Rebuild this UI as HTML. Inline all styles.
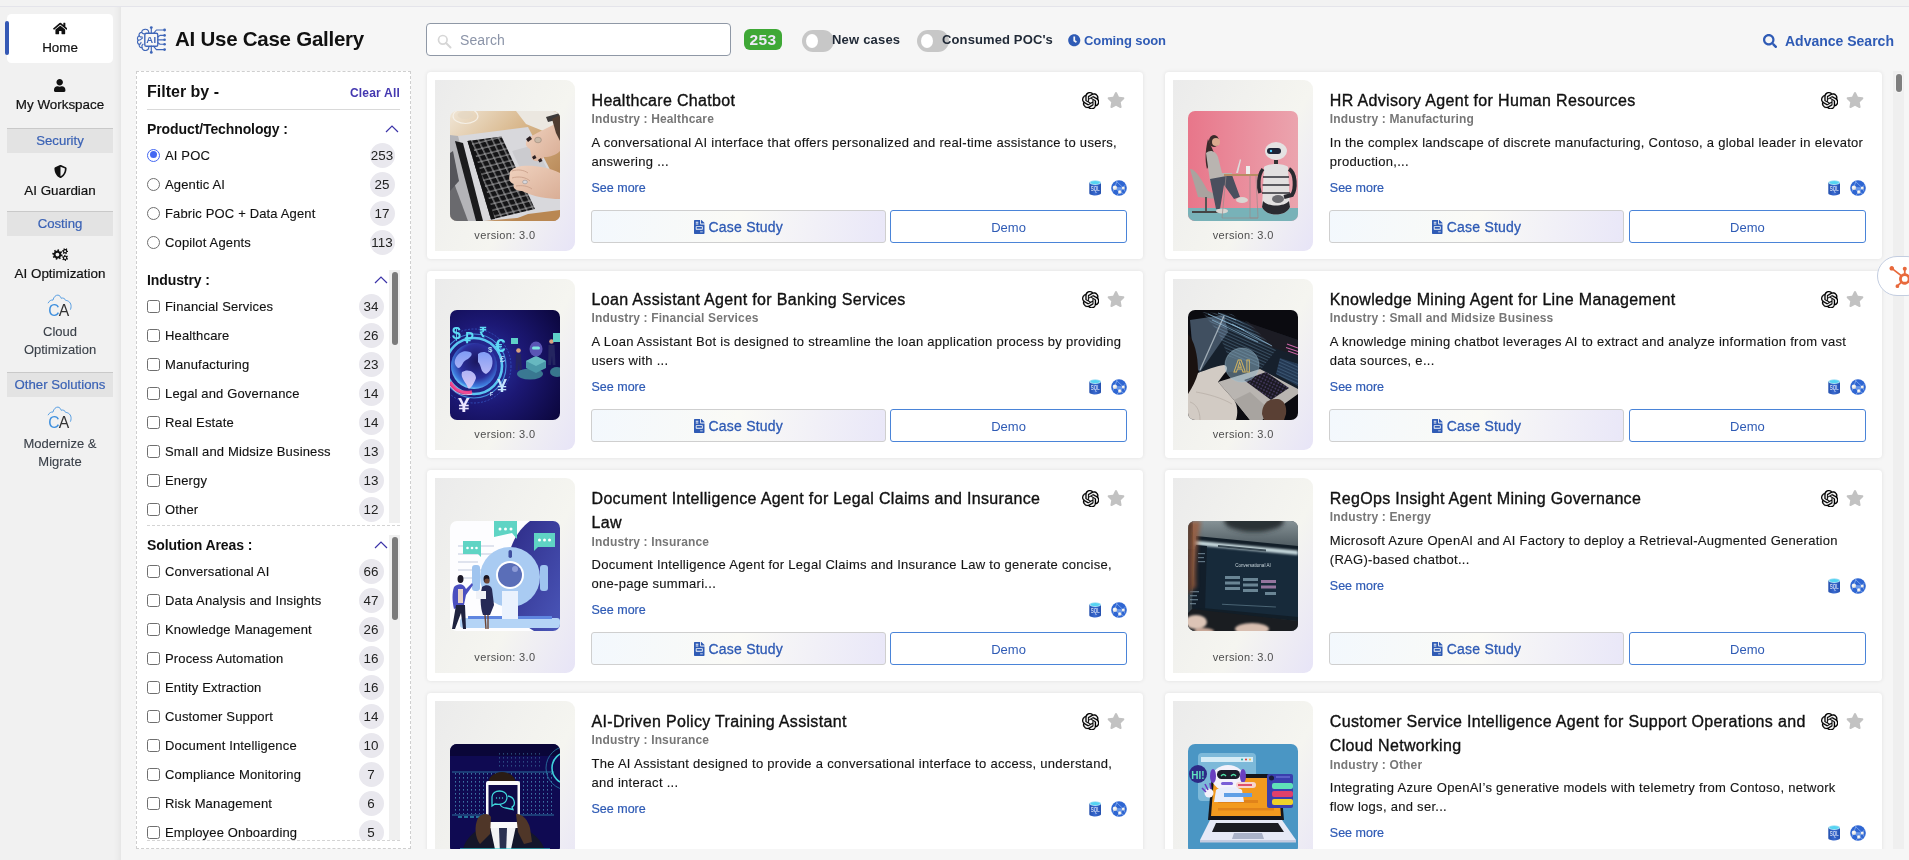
<!DOCTYPE html><html lang="en"><head><meta charset="utf-8"><title>AI Use Case Gallery</title><style>
*{box-sizing:border-box;margin:0;padding:0}
html,body{width:1909px;height:860px;overflow:hidden}
body{background:#f6f6f6;font-family:"Liberation Sans",sans-serif;color:#111;position:relative;font-size:13px}
.abs{position:absolute}
.topstrip{left:0;top:0;width:1909px;height:7px;background:#f2f2f2;border-bottom:1px solid #e4e4ea}
.side{left:0;top:7px;width:121px;height:853px;background:#f1f1f1;border-right:1px solid #e7e7e7;box-shadow:inset -7px 0 6px -6px rgba(0,0,0,.06)}
.nav{position:absolute;left:7px;width:106px;text-align:center;font-size:13.400px;color:#111;-webkit-text-stroke:0.2px #111}
.nav .ic{display:block;margin:0 auto}
.nav .lb{display:block;white-space:nowrap}
.home{top:14px;height:49px;background:#fff;border-radius:4.500px}
.home:before{content:"";position:absolute;left:-2px;top:7px;width:4px;height:34px;border-radius:2px;background:#3458b4}
.sec{position:absolute;left:7px;width:106px;height:25px;background:#e3e3e3;border-top:1px solid #c9c9c9;color:#3a62b5;font-size:13.200px;text-align:center;line-height:24px;-webkit-text-stroke:0.2px #3a62b5}
.grey{color:#3a4049;font-size:13px;line-height:18px;-webkit-text-stroke:0.1px #3a4049}
.title{left:175px;top:26px;font-size:20.5px;font-weight:700;letter-spacing:-0.25px;line-height:26px;white-space:nowrap}
.search{left:426px;top:23px;width:305px;height:33px;border:1px solid #8f98a6;border-radius:4px;background:#fff}
.search svg{position:absolute;left:10px;top:10px}
.search span{position:absolute;left:33px;top:8px;font-size:14px;color:#8b94a8;line-height:16px;letter-spacing:0.1px}
.badge{left:744px;top:29px;width:38px;height:21px;border-radius:6px;background:#3fa836;color:#efeaf8;font-weight:700;font-size:15.500px;letter-spacing:0.4px;text-align:center;line-height:22px}
.tog{top:30px;width:32px;height:22px;border-radius:11px;background:#c7c7c7}
.tog:after{content:"";position:absolute;left:3.700px;top:3.800px;width:12.500px;height:14.500px;border-radius:50%;background:#fff}
.hl{top:32px;font-size:13px;font-weight:700;line-height:16px;white-space:nowrap;color:#222b38}
.blue{color:#2f5bb5}
.filter{left:136px;top:71px;width:275px;height:778px;background:#fff;border:1px dashed #cfcfcf}
.fh{position:absolute;left:10px;font-weight:700;white-space:nowrap}
.row{position:absolute;left:10px;height:20px;font-size:13px;line-height:20px;white-space:nowrap;letter-spacing:0.15px;-webkit-text-stroke:0.12px #111}
.row .bx{position:absolute;left:0;top:3.500px;width:13px;height:13px;border:1px solid #6f6f6f;background:#fff}
.row .cb{border-radius:2.500px}
.row .rd{border-radius:50%}
.row .rd.on{border:1.300px solid #4468f2}
.row .rd.on:after{content:"";position:absolute;left:1.700px;top:1.700px;width:7px;height:7px;border-radius:50%;background:#4468f2}
.row .t{position:absolute;left:18px;top:1px}
.cnt{position:absolute;width:25px;height:25px;border-radius:50%;background:#e9e8ee;text-align:center;line-height:25px;font-size:13.400px;color:#222;letter-spacing:0}
.sb{position:absolute;width:10.500px;background:#f0f0f0}
.sb i{position:absolute;left:3px;width:6px;border-radius:3px;background:#7b7b7b}
.card{position:absolute;width:717px;background:#fff;border-radius:4px;box-shadow:0 0 4px rgba(0,0,0,.09)}
.thumb{position:absolute;left:8.4px;top:8px;width:140px;bottom:8px;border-radius:0 9px 9px 0;background:linear-gradient(118deg,#ebebeb 0%,#f1f1ee 35%,#f5f5f0 62%,#e7e4f7 100%)}
.thumb .img{position:absolute;left:15px;top:50%;margin-top:-55px;width:110px;height:110px;border-radius:7px;overflow:hidden}
.thumb .img svg{display:block}
.thumb .ver{position:absolute;left:0;right:0;bottom:9px;text-align:center;font-size:11px;color:#4d4d4d;letter-spacing:0.35px;line-height:14px}
.ct{position:absolute;left:165px;font-size:16px;letter-spacing:0.33px;line-height:24px;color:#111;white-space:nowrap;-webkit-text-stroke:0.35px #111}
.ind{position:absolute;left:165px;font-size:12px;font-weight:700;color:#777;letter-spacing:0.15px;line-height:14px;white-space:nowrap}
.desc{position:absolute;left:165px;font-size:13px;letter-spacing:0.28px;line-height:19px;color:#151515;white-space:nowrap;-webkit-text-stroke:0.12px #151515}
.more{position:absolute;left:165px;font-size:12.500px;color:#2f5bb5;line-height:14px;-webkit-text-stroke:0.2px #2f5bb5}
.cicon{position:absolute;line-height:0}
.btn{position:absolute;height:33px;border-radius:3px;text-align:center;color:#2f5bb5;white-space:nowrap}
.b1{left:164.600px;width:295px;border:1px solid #cfcfcf;background:linear-gradient(100deg,#f3f8fd 0%,#fafaf6 50%,#e9e7f8 100%);font-size:14px;line-height:33px;letter-spacing:0.22px;-webkit-text-stroke:0.3px #2f5bb5}
.b1 svg{vertical-align:-2px;margin-right:3.800px}
.b2{left:464px;right:15.600px;border:1px solid #4a84d8;background:#fff;font-size:13px;line-height:33px}
.vsb{left:1893px;top:71px;width:11px;height:778px;background:#efefef}
.vsb i{position:absolute;left:3px;top:3px;width:6px;height:18px;border-radius:3px;background:#7f7f7f;box-shadow:0 0 0 1px #f6f6f6}
.hub{left:1877.200px;top:256px;width:50px;height:40px;border-radius:20px;background:#fff;border:1px solid #c3cde0}
.hub svg{position:absolute;left:11.300px;top:8.500px}
</style></head><body>
<div id="root" style="position:absolute;left:0;top:0;width:1909px;height:860px;will-change:transform">
<div class="abs topstrip"></div>
<div class="abs side">
<div class="nav home" style="top:7px"><div style="height:7.700px"></div><svg class="ic" width="14.600" height="13" viewBox="0 0 576 512"><path fill="#111" d="M280.37 148.26L96 300.11V464a16 16 0 0 0 16 16l112.06-.29a16 16 0 0 0 15.92-16V368a16 16 0 0 1 16-16h64a16 16 0 0 1 16 16v95.64a16 16 0 0 0 16 16.05L464 480a16 16 0 0 0 16-16V300L295.67 148.26a12.19 12.19 0 0 0-15.3 0zM571.6 251.47L488 182.56V44.05a12 12 0 0 0-12-12h-56a12 12 0 0 0-12 12v72.61L318.47 43a48 48 0 0 0-61 0L4.34 251.47a12 12 0 0 0-1.6 16.9l25.5 31A12 12 0 0 0 45.15 301l235.22-193.74a12.19 12.19 0 0 1 15.3 0L530.9 301a12 12 0 0 0 16.9-1.6l25.5-31a12 12 0 0 0-1.7-16.93z"/></svg><span class="lb" style="margin-top:4.300px;line-height:18px">Home</span></div>
<div class="nav" style="top:71.700px"><svg class="ic" width="11.400" height="13" viewBox="0 0 448 512"><path fill="#111" d="M224 256c70.7 0 128-57.3 128-128S294.7 0 224 0 96 57.3 96 128s57.3 128 128 128zm89.6 32h-16.7c-22.2 10.2-46.9 16-72.9 16s-50.6-5.800-72.900-16h-16.700C60.200 288 0 348.200 0 422.400V464c0 26.500 21.500 48 48 48h352c26.500 0 48-21.500 48-48v-41.600c0-74.200-60.200-134.400-134.400-134.400z"/></svg><span class="lb" style="margin-top:4.100px;line-height:18px">My Workspace</span></div>
<div class="sec" style="top:121px">Security</div>
<div class="nav" style="top:157.600px"><svg class="ic" width="13" height="13" viewBox="0 0 512 512"><path fill="#111" d="M466.5 83.7l-192-80a48.150 48.150 0 0 0-36.900 0l-192 80C27.700 91.100 16 108.600 16 128c0 198.500 114.500 335.700 221.500 380.300 11.800 4.900 25.100 4.900 36.900 0C360.100 472.600 496 349.300 496 128c0-19.400-11.700-36.900-29.500-44.300zM256.100 446.300l-.1-381 175.900 73.300c-3.300 151.400-82.100 261.100-175.800 307.700z"/></svg><span class="lb" style="margin-top:4.400px;line-height:18px">AI Guardian</span></div>
<div class="sec" style="top:204px">Costing</div>
<div class="nav" style="top:240.600px"><svg class="ic" width="16.400" height="13.100" viewBox="0 0 20 16"><path fill="#111" fill-rule="evenodd" d="M11.40 7.90 L12.99 8.38 L12.63 10.14 L10.98 9.96 L10.06 11.33 L10.85 12.78 L9.35 13.78 L8.32 12.48 L6.70 12.80 L6.22 14.39 L4.46 14.03 L4.64 12.38 L3.27 11.46 L1.82 12.25 L0.82 10.75 L2.12 9.72 L1.80 8.10 L0.21 7.62 L0.57 5.86 L2.22 6.04 L3.14 4.67 L2.35 3.22 L3.85 2.22 L4.88 3.52 L6.50 3.20 L6.98 1.61 L8.74 1.97 L8.56 3.62 L9.93 4.54 L11.38 3.75 L12.38 5.25 L11.08 6.28Z M8.90 8.00 A2.3 2.3 0 1 0 4.30 8.00 A2.3 2.3 0 1 0 8.90 8.00Z M18.65 3.38 L19.79 3.56 L19.64 4.98 L18.49 4.93 L17.77 5.94 L18.18 7.01 L16.89 7.60 L16.35 6.58 L15.12 6.45 L14.40 7.35 L13.24 6.51 L13.86 5.54 L13.35 4.42 L12.21 4.24 L12.36 2.82 L13.51 2.87 L14.23 1.86 L13.82 0.79 L15.11 0.20 L15.65 1.22 L16.88 1.35 L17.60 0.45 L18.76 1.29 L18.14 2.26Z M17.30 3.90 A1.3 1.3 0 1 0 14.70 3.90 A1.3 1.3 0 1 0 17.30 3.90Z M18.68 12.39 L19.72 12.90 L19.16 14.21 L18.08 13.83 L17.09 14.57 L17.17 15.72 L15.75 15.89 L15.54 14.76 L14.41 14.28 L13.45 14.92 L12.59 13.78 L13.47 13.04 L13.32 11.81 L12.28 11.30 L12.84 9.99 L13.92 10.37 L14.91 9.63 L14.83 8.48 L16.25 8.31 L16.46 9.44 L17.59 9.92 L18.55 9.28 L19.41 10.42 L18.53 11.16Z M17.30 12.10 A1.3 1.3 0 1 0 14.70 12.10 A1.3 1.3 0 1 0 17.30 12.10Z"/></svg><span class="lb" style="margin-top:4.100px;line-height:18px">AI Optimization</span></div>
<div class="nav grey" style="top:287px"><svg class="ic" width="26" height="24" viewBox="0 0 28 26"><path d="M1.2 9.6 C2.4 7.2 4.6 6.2 6.4 6.6 C7 3.2 9.6 1 11.8 1.2 C13.8 1.4 14.6 3 15.2 4.6 C17.4 3.8 19.4 5 20.2 7 C23.2 7 26.2 9.6 26 13.6 C26 14.8 25.8 15.6 25.4 16.6" fill="none" stroke="#3d8fde" stroke-width="0.9" stroke-linecap="round"/><text x="1.4" y="24" font-family="Liberation Sans, sans-serif" font-size="17" fill="#3d8fde">C</text><text x="12.6" y="24" font-family="Liberation Sans, sans-serif" font-size="17" fill="#333">A</text></svg><span class="lb" style="margin-top:5px">Cloud</span><span class="lb">Optimization</span></div>
<div class="sec" style="top:365px">Other Solutions</div>
<div class="nav grey" style="top:399px"><svg class="ic" width="26" height="24" viewBox="0 0 28 26"><path d="M1.2 9.6 C2.4 7.2 4.6 6.2 6.4 6.6 C7 3.2 9.6 1 11.8 1.2 C13.8 1.4 14.6 3 15.2 4.6 C17.4 3.8 19.4 5 20.2 7 C23.2 7 26.2 9.6 26 13.6 C26 14.8 25.8 15.6 25.4 16.6" fill="none" stroke="#3d8fde" stroke-width="0.9" stroke-linecap="round"/><text x="1.4" y="24" font-family="Liberation Sans, sans-serif" font-size="17" fill="#3d8fde">C</text><text x="12.6" y="24" font-family="Liberation Sans, sans-serif" font-size="17" fill="#333">A</text></svg><span class="lb" style="margin-top:5px">Modernize &amp;</span><span class="lb">Migrate</span></div>
</div>
<div class="abs" style="left:136px;top:25px"><svg width="31" height="30" viewBox="0 0 31 30"><g fill="none" stroke="#3f66b8" stroke-width="1.150" stroke-linecap="round" stroke-linejoin="round">
<rect x="8.800" y="8.300" width="13" height="13" rx="1.600" stroke-width="1.400"/>
<path d="M15.300 8.500 V3 M15.300 21.100 V27"/>
<path d="M17.600 8.300 L20.400 5 H28 M17.600 21.300 L20.400 24.600 H28"/>
<path d="M21.800 12 L24 10.400 H28 M21.800 14.800 H28 M21.800 17.600 L24 19.200 H28"/>
<path d="M12.800 7.800 C12.800 5 10.600 3.800 8.600 4.400 C6.600 4.600 5.600 6 5.800 7.400 C3.800 7.400 2.600 9 3.200 10.800 C1.400 11.600 0.800 13.800 2.200 15.200 C1 16.600 1.400 18.800 3.200 19.400 C2.800 21.400 4.200 22.800 6 22.600 C6.200 24.600 8.200 25.800 10.200 25.400 C12 25.200 12.800 24 12.800 22"/>
<path d="M5.800 7.400 C6.400 8.600 7.400 9 8.600 8.800 M3.200 10.800 C4 12 5.200 12.200 6 11.800 M2.200 15.200 C3.600 15.400 5 14.400 6.600 12.800 M6 22.600 C5.600 21 6 19.800 7 19.200 M3.200 19.400 C4.400 19.200 5 18.400 5 17.400"/>
</g><g fill="#3f66b8"><circle cx="15.300" cy="2.600" r="1.400"/><circle cx="15.300" cy="27.400" r="1.400"/><circle cx="28.600" cy="5" r="1.400"/><circle cx="28.600" cy="24.600" r="1.400"/><circle cx="28.600" cy="10.400" r="1.300"/><circle cx="28.600" cy="14.800" r="1.300"/><circle cx="28.600" cy="19.200" r="1.300"/></g>
<text x="15.300" y="18.300" text-anchor="middle" font-family="Liberation Sans, sans-serif" font-size="9.500" font-weight="700" fill="#3f66b8" letter-spacing="0.2">AI</text></svg></div>
<div class="abs title">AI Use Case Gallery</div>
<div class="abs search"><svg width="15" height="15" viewBox="0 0 15 15"><circle cx="5.800" cy="5.800" r="4.300" fill="none" stroke="#d6d6d6" stroke-width="1.700"/><path d="M9 9 L13.500 13.500" stroke="#d6d6d6" stroke-width="2" stroke-linecap="round"/></svg><span>Search</span></div>
<div class="abs badge">253</div>
<div class="abs tog" style="left:802px"></div><div class="abs hl" style="left:832px;letter-spacing:0.2px">New cases</div>
<div class="abs tog" style="left:917px"></div><div class="abs hl" style="left:942px;letter-spacing:0.12px">Consumed POC's</div>
<div class="abs" style="left:1068px;top:34px"><svg width="12.500" height="12.500" viewBox="0 0 512 512"><path fill="#2f5bb5" d="M256 8C119 8 8 119 8 256s111 248 248 248 248-111 248-248S393 8 256 8zm57.1 350.1L224.9 294c-3.100-2.300-4.900-5.900-4.900-9.700V116c0-6.600 5.400-12 12-12h48c6.600 0 12 5.400 12 12v137.700l63.500 46.200c5.400 3.900 6.500 11.400 2.600 16.800l-28.200 38.800c-3.900 5.300-11.400 6.500-16.800 2.600z"/></svg></div><div class="abs hl blue" style="left:1084px;top:33px;letter-spacing:-0.1px">Coming soon</div>
<div class="abs" style="left:1762.800px;top:33.600px"><svg width="14.200" height="14.200" viewBox="0 0 512 512"><path fill="#2f5bb5" d="M505 442.7L405.3 343c-4.500-4.500-10.600-7-17-7H372c27.600-35.300 44-79.700 44-128C416 93.100 322.900 0 208 0S0 93.100 0 208s93.100 208 208 208c48.300 0 92.700-16.400 128-44v16.300c0 6.400 2.500 12.500 7 17l99.700 99.700c9.400 9.400 24.600 9.400 33.900 0l28.300-28.300c9.400-9.400 9.400-24.600.1-34zM208 336c-70.700 0-128-57.200-128-128 0-70.700 57.200-128 128-128 70.700 0 128 57.200 128 128 0 70.700-57.200 128-128 128z"/></svg></div><div class="abs blue" style="left:1785px;top:33px;font-size:14px;font-weight:700;line-height:17px;white-space:nowrap">Advance Search</div>
<div class="abs filter">
<div class="fh" style="top:10px;left:10px;font-size:16px;line-height:20px">Filter by -</div>
<div class="fh" style="top:14px;left:auto;right:10px;font-size:12px;line-height:14px;color:#4438b0;letter-spacing:0.2px">Clear All</div>
<div style="position:absolute;left:10px;right:10.500px;top:37px;border-top:1px solid #d9d9d9"></div>
<div class="fh" style="top:48px;left:10px;font-size:14px;line-height:18px;letter-spacing:-0.1px;color:#111">Product/Technology :</div>
<div style="position:absolute;left:248px;top:49px"><svg width="14" height="8" viewBox="0 0 14 8"><path d="M1 7 L7 1 L13 7" fill="none" stroke="#3b33a8" stroke-width="1.2"/></svg></div>
<div class="row" style="top:73px;left:10px"><span class="bx rd on"></span><span class="t">AI POC</span></div>
<div class="cnt" style="left:232.5px;top:70.5px">253</div>
<div class="row" style="top:102px;left:10px"><span class="bx rd"></span><span class="t">Agentic AI</span></div>
<div class="cnt" style="left:232.5px;top:99.5px">25</div>
<div class="row" style="top:131px;left:10px"><span class="bx rd"></span><span class="t">Fabric POC + Data Agent</span></div>
<div class="cnt" style="left:232.5px;top:128.5px">17</div>
<div class="row" style="top:160px;left:10px"><span class="bx rd"></span><span class="t">Copilot Agents</span></div>
<div class="cnt" style="left:232.5px;top:157.5px">113</div>
<div class="fh" style="top:199px;left:10px;font-size:14px;line-height:18px;letter-spacing:-0.1px;color:#111">Industry :</div>
<div style="position:absolute;left:237px;top:200px"><svg width="14" height="8" viewBox="0 0 14 8"><path d="M1 7 L7 1 L13 7" fill="none" stroke="#3b33a8" stroke-width="1.2"/></svg></div>
<div class="row" style="top:224px;left:10px"><span class="bx cb"></span><span class="t">Financial Services</span></div>
<div class="cnt" style="left:221.5px;top:221.5px">34</div>
<div class="row" style="top:253px;left:10px"><span class="bx cb"></span><span class="t">Healthcare</span></div>
<div class="cnt" style="left:221.5px;top:250.5px">26</div>
<div class="row" style="top:282px;left:10px"><span class="bx cb"></span><span class="t">Manufacturing</span></div>
<div class="cnt" style="left:221.5px;top:279.5px">23</div>
<div class="row" style="top:311px;left:10px"><span class="bx cb"></span><span class="t">Legal and Governance</span></div>
<div class="cnt" style="left:221.5px;top:308.5px">14</div>
<div class="row" style="top:340px;left:10px"><span class="bx cb"></span><span class="t">Real Estate</span></div>
<div class="cnt" style="left:221.5px;top:337.5px">14</div>
<div class="row" style="top:369px;left:10px"><span class="bx cb"></span><span class="t">Small and Midsize Business</span></div>
<div class="cnt" style="left:221.5px;top:366.5px">13</div>
<div class="row" style="top:398px;left:10px"><span class="bx cb"></span><span class="t">Energy</span></div>
<div class="cnt" style="left:221.5px;top:395.5px">13</div>
<div class="row" style="top:427px;left:10px"><span class="bx cb"></span><span class="t">Other</span></div>
<div class="cnt" style="left:221.5px;top:424.5px">12</div>
<div class="sb" style="left:252px;top:198px;height:253px"><i style="top:2px;height:73px"></i></div>
<div style="position:absolute;left:10px;right:10.500px;top:453px;border-top:1px dashed #d4d4d4"></div>
<div class="fh" style="top:464px;left:10px;font-size:14px;line-height:18px;letter-spacing:-0.1px;color:#111">Solution Areas :</div>
<div style="position:absolute;left:237px;top:465px"><svg width="14" height="8" viewBox="0 0 14 8"><path d="M1 7 L7 1 L13 7" fill="none" stroke="#3b33a8" stroke-width="1.2"/></svg></div>
<div class="row" style="top:489px;left:10px"><span class="bx cb"></span><span class="t">Conversational AI</span></div>
<div class="cnt" style="left:221.5px;top:486.5px">66</div>
<div class="row" style="top:518px;left:10px"><span class="bx cb"></span><span class="t">Data Analysis and Insights</span></div>
<div class="cnt" style="left:221.5px;top:515.5px">47</div>
<div class="row" style="top:547px;left:10px"><span class="bx cb"></span><span class="t">Knowledge Management</span></div>
<div class="cnt" style="left:221.5px;top:544.5px">26</div>
<div class="row" style="top:576px;left:10px"><span class="bx cb"></span><span class="t">Process Automation</span></div>
<div class="cnt" style="left:221.5px;top:573.5px">16</div>
<div class="row" style="top:605px;left:10px"><span class="bx cb"></span><span class="t">Entity Extraction</span></div>
<div class="cnt" style="left:221.5px;top:602.5px">16</div>
<div class="row" style="top:634px;left:10px"><span class="bx cb"></span><span class="t">Customer Support</span></div>
<div class="cnt" style="left:221.5px;top:631.5px">14</div>
<div class="row" style="top:663px;left:10px"><span class="bx cb"></span><span class="t">Document Intelligence</span></div>
<div class="cnt" style="left:221.5px;top:660.5px">10</div>
<div class="row" style="top:692px;left:10px"><span class="bx cb"></span><span class="t">Compliance Monitoring</span></div>
<div class="cnt" style="left:221.5px;top:689.5px">7</div>
<div class="row" style="top:721px;left:10px"><span class="bx cb"></span><span class="t">Risk Management</span></div>
<div class="cnt" style="left:221.5px;top:718.5px">6</div>
<div class="row" style="top:750px;left:10px"><span class="bx cb"></span><span class="t">Employee Onboarding</span></div>
<div class="cnt" style="left:221.5px;top:747.5px">5</div>
<div class="sb" style="left:252px;top:463px;height:305px"><i style="top:2px;height:83px"></i></div>
<div style="position:absolute;left:0;right:0;top:768px;height:8px;background:#fff;border-top:1px dashed #d4d4d4;margin:0 10px"></div>
</div>
<div class="abs" style="left:0;top:0;width:1909px;height:849px;overflow:hidden">
<div class="card" style="left:426.5px;top:72px;height:187px;width:716.6px">
<div class="thumb"><div class="img"><svg width="110" height="110" viewBox="0 0 110 110"><defs><linearGradient id="wd" x1="0" y1="0" x2="1" y2="1"><stop offset="0" stop-color="#f0e6d6"/><stop offset="0.4" stop-color="#d8b68a"/><stop offset="1" stop-color="#a9733f"/></linearGradient>
<pattern id="keys" width="6.4" height="6.4" patternUnits="userSpaceOnUse" patternTransform="rotate(64) skewX(-12)"><rect width="6.4" height="6.4" fill="#8e8e90"/><rect x="0.7" y="0.7" width="5.3" height="5.3" rx="0.8" fill="#141416"/></pattern>
<linearGradient id="skin" x1="0" y1="0" x2="1" y2="1"><stop offset="0" stop-color="#f0d2bf"/><stop offset="1" stop-color="#d9ae96"/></linearGradient></defs>
<rect width="110" height="110" fill="url(#wd)"/>
<ellipse cx="15.5" cy="5" rx="12.5" ry="7.5" fill="none" stroke="#f6f2ea" stroke-width="1.2" opacity=".9"/><ellipse cx="15.5" cy="4" rx="8" ry="4" fill="#e2d6c2" opacity=".6"/>
<polygon points="66,0 110,0 110,20 98,22 76,13" fill="#ebe7e0"/><polygon points="96,6 110,2 110,8 98,11" fill="#3d3a3a"/>
<polygon points="8,25 78,16 110,78 110,103 34,110 28,110" fill="#d8d8dc"/>
<polygon points="62,40 84,34 104,70 80,78" fill="#cbcbcf"/>
<polygon points="17.500,30 51.500,25.500 85,98 41,108.500" fill="url(#keys)"/>
<polygon points="17.500,30 21,29.500 45,108 41,108.500" fill="#141416"/>
<polygon points="0,24 8,25 31,110 0,110" fill="#b4b4b8"/>
<polygon points="5,30 13,32 33,110 26,110" fill="#1b1b1d"/>
<polygon points="0,78 4,72 18,110 0,110" fill="#6a6a6e"/><polygon points="0,42 3,40 9,70 0,80" fill="#55555a"/>
<polygon points="78,103 110,99 110,110 60,110" fill="#b98752"/>
<path d="M110 10 C100 16 90 20 80 26 C74 30 75 36 80 38 L82 48 C86 52 92 50 94 46 C100 46 106 44 110 40 Z" fill="url(#skin)"/>
<path d="M76 28 l4 -3 l2 3 l-4 3 Z M82 46 l3 -2 l1.500 3 l-3 1.500 Z M88 49 l3 -2 l1.500 3 l-3 1.500 Z" fill="#2a1f22"/>
<ellipse cx="88" cy="29" rx="3.400" ry="2.800" fill="#c9b9a8" stroke="#8d7a6a" stroke-width="0.500"/>
<path d="M110 62 C98 56 84 54 72 55 C64 56 58 60 60 64 C58 68 60 72 64 73 C62 77 66 80 72 80 C84 86 98 88 110 88 Z" fill="url(#skin)"/>
<path d="M62 60 C68 58 74 59 78 62 M62 67 C68 65 76 66 80 70 M66 75 C72 74 78 75 82 78" stroke="#c79c86" stroke-width="0.800" fill="none"/>
<ellipse cx="75" cy="71" rx="2.400" ry="1.800" fill="#d8d8dc" stroke="#8a8a90" stroke-width="0.500"/>
<polygon points="102,8 110,4 110,30 106,22" fill="#4f3c30"/></svg></div><div class="ver">version: 3.0</div></div>
<div class="ct" style="top:17px">Healthcare Chatbot</div>
<div class="ind" style="top:40px">Industry : Healthcare</div>
<div class="desc" style="top:61px">A conversational AI interface that offers personalized and real-time assistance to users,<br>answering ...</div>
<div class="more" style="top:109px">See more</div>
<div class="cicon" style="right:43.900px;top:19.800px"><svg width="17.400" height="17.400" viewBox="0 0 24 24"><path fill="#000" stroke="#000" stroke-width="0.35" d="M22.2819 9.8211a5.9847 5.9847 0 0 0-.5157-4.9108 6.0462 6.0462 0 0 0-6.5098-2.9A6.0651 6.0651 0 0 0 4.9807 4.1818a5.9847 5.9847 0 0 0-3.9977 2.9 6.0462 6.0462 0 0 0 .7427 7.0966 5.98 5.98 0 0 0 .511 4.9107 6.051 6.051 0 0 0 6.5146 2.9001A5.9847 5.9847 0 0 0 13.2599 24a6.0557 6.0557 0 0 0 5.7718-4.2058 5.9894 5.9894 0 0 0 3.9977-2.9001 6.0557 6.0557 0 0 0-.7475-7.0729zm-9.022 12.6081a4.4755 4.4755 0 0 1-2.8764-1.0408l.1419-.0804 4.7783-2.7582a.7948.7948 0 0 0 .3927-.6813v-6.7369l2.02 1.1686a.071.071 0 0 1 .038.052v5.5826a4.504 4.504 0 0 1-4.4945 4.4944zm-9.6607-4.1254a4.4708 4.4708 0 0 1-.5346-3.0137l.142.0852 4.783 2.7582a.7712.7712 0 0 0 .7806 0l5.8428-3.3685v2.3324a.0804.0804 0 0 1-.0332.0615L9.74 19.9502a4.4992 4.4992 0 0 1-6.1408-1.6464zM2.3408 7.8956a4.485 4.485 0 0 1 2.3655-1.9728V11.6a.7664.7664 0 0 0 .3879.6765l5.8144 3.3543-2.0201 1.1685a.0757.0757 0 0 1-.071 0l-4.8303-2.7865A4.504 4.504 0 0 1 2.3408 7.872zm16.5963 3.8558L13.1038 8.364 15.1192 7.2a.0757.0757 0 0 1 .071 0l4.8303 2.7913a4.4944 4.4944 0 0 1-.6765 8.1042v-5.6772a.79.79 0 0 0-.407-.667zm2.0107-3.0231l-.142-.0852-4.7735-2.7818a.7759.7759 0 0 0-.7854 0L9.409 9.2297V6.8974a.0662.0662 0 0 1 .0284-.0615l4.8303-2.7866a4.4992 4.4992 0 0 1 6.6802 4.66zM8.3065 12.863l-2.02-1.1638a.0804.0804 0 0 1-.038-.0567V6.0742a4.4992 4.4992 0 0 1 7.3757-3.4537l-.142.0805L8.704 5.459a.7948.7948 0 0 0-.3927.6813zm1.0976-2.3654l2.602-1.4998 2.6069 1.4998v2.9994l-2.5974 1.4997-2.6067-1.4997Z"/></svg></div><div class="cicon" style="right:18px;top:20px"><svg width="18" height="16" viewBox="0 0 576 512"><path fill="#c2c2c2" d="M259.3 17.8L194 150.2 47.9 171.5c-26.200 3.800-36.700 36.100-17.700 54.600l105.700 103-25 145.500c-4.500 26.300 23.200 46 46.400 33.700L288 439.600l130.700 68.700c23.200 12.200 50.900-7.400 46.400-33.700l-25-145.500 105.700-103c19-18.500 8.500-50.800-17.700-54.600L382 150.200 316.700 17.800c-11.700-23.600-45.600-23.900-57.400 0z"/></svg></div>
<div class="cicon" style="right:41.700px;top:108.3px"><svg width="12.400" height="15.600" viewBox="0 0 12.400 15.600"><defs><linearGradient id="sqg" x1="0" y1="0" x2="1" y2="0"><stop offset="0" stop-color="#2450ae"/><stop offset="0.5" stop-color="#3a6ad0"/><stop offset="1" stop-color="#2450ae"/></linearGradient></defs><path d="M0.300 2.600 V13.200 C0.300 14.500 2.900 15.400 6.200 15.400 C9.500 15.400 12.100 14.500 12.100 13.200 V2.600 Z" fill="url(#sqg)"/><ellipse cx="6.200" cy="2.600" rx="5.900" ry="2.400" fill="#a8e2f5"/><ellipse cx="6.200" cy="2.500" rx="4.600" ry="1.500" fill="#55d4f2"/><text transform="translate(6.200 10.900) scale(0.700 1)" text-anchor="middle" font-family="Liberation Sans, sans-serif" font-size="6.300" fill="#fff">SQL</text></svg></div><div class="cicon" style="right:16.300px;top:108px"><svg width="16" height="16" viewBox="0 0 16 16"><defs><radialGradient id="wbn" cx="0.4" cy="0.35" r="0.7"><stop offset="0" stop-color="#ffffff"/><stop offset="1" stop-color="#d9d9d6"/></radialGradient></defs><circle cx="8" cy="8" r="7.800" fill="#2f66d2"/><path d="M3.700 7.700 L12.300 7.900 L8.800 12.100 Z" fill="#5f90e8"/><path d="M3.700 7.700 L6 1 M3.700 7.700 L1.600 12 M12.300 7.900 L5.500 1.500 M12.300 7.900 L14.600 4.600 M12.300 7.900 L14.400 11.800 M8.800 12.100 L6 15.200 M8.800 12.100 L12.600 13.800 M3.700 7.700 L8.800 12.100 L12.300 7.900 Z" fill="none" stroke="#8fb4f2" stroke-width="0.700"/><circle cx="3.900" cy="7.700" r="2.200" fill="url(#wbn)"/><circle cx="12.300" cy="7.900" r="1.500" fill="url(#wbn)"/><circle cx="8.800" cy="12.100" r="1.750" fill="url(#wbn)"/></svg></div>
<div class="btn b1" style="top:138px;width:295px"><svg width="10.500" height="14" viewBox="0 0 384 512"><path fill="#2f5bb5" d="M288 256H96v64h192v-64zm89-151L279.100 7c-4.500-4.500-10.600-7-17-7H256v128h128v-6.100c0-6.300-2.500-12.400-7-16.900zm-153 31V0H24C10.700 0 0 10.700 0 24v464c0 13.300 10.700 24 24 24h336c13.300 0 24-10.700 24-24V160H248c-13.200 0-24-10.800-24-24zM64 72c0-4.420 3.580-8 8-8h80c4.420 0 8 3.580 8 8v16c0 4.420-3.580 8-8 8H72c-4.420 0-8-3.580-8-8V72zm0 64c0-4.420 3.580-8 8-8h80c4.420 0 8 3.580 8 8v16c0 4.420-3.580 8-8 8H72c-4.420 0-8-3.580-8-8v-16zm256 304c0 4.420-3.580 8-8 8h-80c-4.420 0-8-3.580-8-8v-16c0-4.420 3.580-8 8-8h80c4.420 0 8 3.580 8 8v16zm0-200v96c0 8.840-7.160 16-16 16H80c-8.840 0-16-7.160-16-16v-96c0-8.840 7.160-16 16-16h224c8.840 0 16 7.160 16 16z"/></svg>Case Study</div><div class="btn b2" style="top:138px;left:463.6px;right:16.1px">Demo</div>
</div>
<div class="card" style="left:1164.8px;top:72px;height:187px;width:717.3px">
<div class="thumb"><div class="img"><svg width="110" height="110" viewBox="0 0 110 110"><defs><linearGradient id="hrg" x1="0" y1="0" x2="1" y2="0"><stop offset="0" stop-color="#e8768a"/><stop offset="1" stop-color="#eba4ae"/></linearGradient></defs>
<rect width="110" height="110" fill="url(#hrg)"/><rect y="97" width="110" height="13" fill="#78b2b8"/>
<path d="M2 58 C8 58 14 70 20 80 L30 84 L28 88 L10 86 Z" fill="#a9a39f"/><rect x="17" y="86" width="2" height="16" fill="#555"/><rect x="4" y="100" width="28" height="2" fill="#444"/>
<ellipse cx="26" cy="30" rx="5" ry="6" fill="#3a2a2a"/><path d="M20 28 C17 40 17 50 19 58 L27 44 Z" fill="#3a2a2a"/><circle cx="28" cy="31" r="4" fill="#dba98f"/>
<path d="M18 42 C22 38 28 40 30 46 L34 62 L44 62 L44 66 L22 70 Z" fill="#b9b4b0"/>
<path d="M22 68 L44 64 L52 86 L46 88 L36 74 L32 98 L28 98 Z" fill="#4a4f5e"/>
<ellipse cx="54" cy="89" rx="6" ry="3" fill="#d9d6d2"/><ellipse cx="34" cy="100" rx="6" ry="2.500" fill="#d9d6d2"/>
<rect x="36" y="63" width="34" height="2" fill="#b78d62"/><path d="M62 65 L62 107 L70 107 L68 65" fill="none" stroke="#9a8a8a" stroke-width="0.700"/><path d="M38 65 L34 107 L70 107" fill="none" stroke="#9a8a8a" stroke-width="0.700"/>
<polygon points="48,62 52,48 53,49 50,62" fill="#ddd"/><rect x="58" y="55" width="4" height="8" fill="#eee"/>
<g transform="translate(0 4)"><ellipse cx="88" cy="36" rx="11" ry="9" fill="#e4e2e2"/><rect x="79" y="33" width="14" height="6" rx="3" fill="#1d2436"/><circle cx="83" cy="36" r="1.200" fill="#4fd0ff"/><rect x="86" y="45" width="4" height="5" fill="#333"/>
<path d="M76 52 C80 48 96 48 100 52 L102 92 C98 102 78 102 74 92 Z" fill="#e2e0e0"/>
<path d="M74 92 C78 102 98 102 102 92 L101 86 C96 92 80 92 75 86 Z" fill="#2a2a30"/>
<path d="M75 62 H101 M74.500 70 H101.500 M74 78 H102" stroke="#2f2f36" stroke-width="1.400"/>
<path d="M101 54 C108 58 108 74 104 80 L96 82" fill="none" stroke="#2a2a30" stroke-width="4"/><path d="M75 54 C70 60 70 72 72 78" fill="none" stroke="#2a2a30" stroke-width="3.500"/>
<ellipse cx="90" cy="84" rx="6" ry="4" fill="#6b6b70"/></g></svg></div><div class="ver">version: 3.0</div></div>
<div class="ct" style="top:17px">HR Advisory Agent for Human Resources</div>
<div class="ind" style="top:40px">Industry : Manufacturing</div>
<div class="desc" style="top:61px">In the complex landscape of discrete manufacturing, Contoso, a global leader in elevator<br>production,...</div>
<div class="more" style="top:109px">See more</div>
<div class="cicon" style="right:43.900px;top:19.800px"><svg width="17.400" height="17.400" viewBox="0 0 24 24"><path fill="#000" stroke="#000" stroke-width="0.35" d="M22.2819 9.8211a5.9847 5.9847 0 0 0-.5157-4.9108 6.0462 6.0462 0 0 0-6.5098-2.9A6.0651 6.0651 0 0 0 4.9807 4.1818a5.9847 5.9847 0 0 0-3.9977 2.9 6.0462 6.0462 0 0 0 .7427 7.0966 5.98 5.98 0 0 0 .511 4.9107 6.051 6.051 0 0 0 6.5146 2.9001A5.9847 5.9847 0 0 0 13.2599 24a6.0557 6.0557 0 0 0 5.7718-4.2058 5.9894 5.9894 0 0 0 3.9977-2.9001 6.0557 6.0557 0 0 0-.7475-7.0729zm-9.022 12.6081a4.4755 4.4755 0 0 1-2.8764-1.0408l.1419-.0804 4.7783-2.7582a.7948.7948 0 0 0 .3927-.6813v-6.7369l2.02 1.1686a.071.071 0 0 1 .038.052v5.5826a4.504 4.504 0 0 1-4.4945 4.4944zm-9.6607-4.1254a4.4708 4.4708 0 0 1-.5346-3.0137l.142.0852 4.783 2.7582a.7712.7712 0 0 0 .7806 0l5.8428-3.3685v2.3324a.0804.0804 0 0 1-.0332.0615L9.74 19.9502a4.4992 4.4992 0 0 1-6.1408-1.6464zM2.3408 7.8956a4.485 4.485 0 0 1 2.3655-1.9728V11.6a.7664.7664 0 0 0 .3879.6765l5.8144 3.3543-2.0201 1.1685a.0757.0757 0 0 1-.071 0l-4.8303-2.7865A4.504 4.504 0 0 1 2.3408 7.872zm16.5963 3.8558L13.1038 8.364 15.1192 7.2a.0757.0757 0 0 1 .071 0l4.8303 2.7913a4.4944 4.4944 0 0 1-.6765 8.1042v-5.6772a.79.79 0 0 0-.407-.667zm2.0107-3.0231l-.142-.0852-4.7735-2.7818a.7759.7759 0 0 0-.7854 0L9.409 9.2297V6.8974a.0662.0662 0 0 1 .0284-.0615l4.8303-2.7866a4.4992 4.4992 0 0 1 6.6802 4.66zM8.3065 12.863l-2.02-1.1638a.0804.0804 0 0 1-.038-.0567V6.0742a4.4992 4.4992 0 0 1 7.3757-3.4537l-.142.0805L8.704 5.459a.7948.7948 0 0 0-.3927.6813zm1.0976-2.3654l2.602-1.4998 2.6069 1.4998v2.9994l-2.5974 1.4997-2.6067-1.4997Z"/></svg></div><div class="cicon" style="right:18px;top:20px"><svg width="18" height="16" viewBox="0 0 576 512"><path fill="#c2c2c2" d="M259.3 17.8L194 150.2 47.9 171.5c-26.200 3.800-36.700 36.100-17.700 54.600l105.700 103-25 145.500c-4.500 26.300 23.200 46 46.400 33.700L288 439.600l130.700 68.700c23.200 12.200 50.900-7.400 46.400-33.700l-25-145.500 105.700-103c19-18.500 8.500-50.800-17.700-54.600L382 150.200 316.700 17.800c-11.700-23.600-45.600-23.900-57.400 0z"/></svg></div>
<div class="cicon" style="right:41.700px;top:108.3px"><svg width="12.400" height="15.600" viewBox="0 0 12.400 15.600"><defs><linearGradient id="sqg" x1="0" y1="0" x2="1" y2="0"><stop offset="0" stop-color="#2450ae"/><stop offset="0.5" stop-color="#3a6ad0"/><stop offset="1" stop-color="#2450ae"/></linearGradient></defs><path d="M0.300 2.600 V13.200 C0.300 14.500 2.900 15.400 6.200 15.400 C9.500 15.400 12.100 14.500 12.100 13.200 V2.600 Z" fill="url(#sqg)"/><ellipse cx="6.200" cy="2.600" rx="5.900" ry="2.400" fill="#a8e2f5"/><ellipse cx="6.200" cy="2.500" rx="4.600" ry="1.500" fill="#55d4f2"/><text transform="translate(6.200 10.900) scale(0.700 1)" text-anchor="middle" font-family="Liberation Sans, sans-serif" font-size="6.300" fill="#fff">SQL</text></svg></div><div class="cicon" style="right:16.300px;top:108px"><svg width="16" height="16" viewBox="0 0 16 16"><defs><radialGradient id="wbn" cx="0.4" cy="0.35" r="0.7"><stop offset="0" stop-color="#ffffff"/><stop offset="1" stop-color="#d9d9d6"/></radialGradient></defs><circle cx="8" cy="8" r="7.800" fill="#2f66d2"/><path d="M3.700 7.700 L12.300 7.900 L8.800 12.100 Z" fill="#5f90e8"/><path d="M3.700 7.700 L6 1 M3.700 7.700 L1.600 12 M12.300 7.900 L5.500 1.500 M12.300 7.900 L14.600 4.600 M12.300 7.900 L14.400 11.800 M8.800 12.100 L6 15.200 M8.800 12.100 L12.600 13.800 M3.700 7.700 L8.800 12.100 L12.300 7.900 Z" fill="none" stroke="#8fb4f2" stroke-width="0.700"/><circle cx="3.900" cy="7.700" r="2.200" fill="url(#wbn)"/><circle cx="12.300" cy="7.900" r="1.500" fill="url(#wbn)"/><circle cx="8.800" cy="12.100" r="1.750" fill="url(#wbn)"/></svg></div>
<div class="btn b1" style="top:138px;width:295px"><svg width="10.500" height="14" viewBox="0 0 384 512"><path fill="#2f5bb5" d="M288 256H96v64h192v-64zm89-151L279.100 7c-4.500-4.500-10.600-7-17-7H256v128h128v-6.100c0-6.300-2.500-12.400-7-16.900zm-153 31V0H24C10.700 0 0 10.700 0 24v464c0 13.300 10.700 24 24 24h336c13.300 0 24-10.700 24-24V160H248c-13.200 0-24-10.800-24-24zM64 72c0-4.420 3.580-8 8-8h80c4.420 0 8 3.580 8 8v16c0 4.420-3.580 8-8 8H72c-4.420 0-8-3.580-8-8V72zm0 64c0-4.420 3.580-8 8-8h80c4.420 0 8 3.580 8 8v16c0 4.420-3.580 8-8 8H72c-4.420 0-8-3.580-8-8v-16zm256 304c0 4.420-3.580 8-8 8h-80c-4.420 0-8-3.580-8-8v-16c0-4.420 3.580-8 8-8h80c4.420 0 8 3.580 8 8v16zm0-200v96c0 8.840-7.160 16-16 16H80c-8.840 0-16-7.160-16-16v-96c0-8.840 7.160-16 16-16h224c8.840 0 16 7.160 16 16z"/></svg>Case Study</div><div class="btn b2" style="top:138px;left:464.3px;right:16.4px">Demo</div>
</div>
<div class="card" style="left:426.5px;top:271px;height:187px;width:716.6px">
<div class="thumb"><div class="img"><svg width="110" height="110" viewBox="0 0 110 110"><defs><radialGradient id="lg1" cx="0.3" cy="0.5" r="0.85"><stop offset="0" stop-color="#2a36a6"/><stop offset="0.45" stop-color="#1c1874"/><stop offset="1" stop-color="#0b063c"/></radialGradient><radialGradient id="lg2" cx="0.55" cy="0.4" r="0.62"><stop offset="0" stop-color="#1a1760"/><stop offset="0.6" stop-color="#2b2f9c"/><stop offset="0.88" stop-color="#3f7fe0"/><stop offset="1" stop-color="#7fe0ff"/></radialGradient><linearGradient id="lg3" x1="0" y1="0" x2="0" y2="1"><stop offset="0" stop-color="#7f9cf5"/><stop offset="1" stop-color="#d9c8f5"/></linearGradient></defs>
<rect width="110" height="110" fill="url(#lg1)"/>
<circle cx="24" cy="56" r="37" fill="none" stroke="#3f6fe0" stroke-width="0.8" stroke-dasharray="2 1.500" opacity=".7"/><circle cx="24" cy="56" r="32" fill="none" stroke="#4fa8f0" stroke-width="1.200" opacity=".8"/>
<circle cx="24" cy="56" r="28" fill="none" stroke="#5fd0f8" stroke-width="2.600" opacity=".95"/>
<circle cx="24" cy="56" r="23" fill="url(#lg2)"/>
<path d="M5 50 C8 42 14 40 20 42 C24 44 20 48 16 50 C12 52 12 58 8 58 C6 56 4 54 5 50 Z M12 62 C18 58 26 62 26 68 C24 74 20 80 18 78 C16 72 10 68 12 62 Z M28 44 C32 40 40 42 42 48 C44 56 40 62 36 64 C30 62 32 56 28 52 Z" fill="url(#lg3)"/>
<path d="M0 72 C4 80 12 84 22 82" fill="none" stroke="#ff3f8a" stroke-width="3.500" opacity=".9"/><path d="M0 76 C6 84 14 86 22 84" fill="none" stroke="#ffd0e8" stroke-width="1" opacity=".8"/>
<g font-family="Liberation Sans, sans-serif" font-weight="700" fill="#5fdcf5"><text x="2" y="29" font-size="16">$</text><text x="15" y="33" font-size="15">₽</text><text x="29" y="27" font-size="14">₹</text><text x="45" y="42" font-size="19">€</text><text x="50" y="52" font-size="9" fill="#a8d8f5">£</text><text x="38" y="42" font-size="8" fill="#a8d8f5">$</text><text x="40" y="86" font-size="5" fill="#cfe8ff">F</text></g>
<g font-family="Liberation Sans, sans-serif" font-weight="700" fill="#ece6ff"><text x="8" y="102" font-size="21">¥</text><text x="47" y="82" font-size="18" fill="#c4e6ff">¥</text></g>
<ellipse cx="80" cy="64" rx="13" ry="5.500" fill="#3f8a98" opacity=".85"/><ellipse cx="107" cy="62" rx="7" ry="5" fill="#3f8a98" opacity=".85"/>
<polygon points="76,51 86,46 96,51 96,58 86,63 76,58" fill="#4a98a8"/><polygon points="76,51 86,46 96,51 86,56" fill="#66b8c0"/><ellipse cx="86" cy="39" rx="6.500" ry="7.500" fill="#5a55b5"/><rect x="82" y="36.500" width="8" height="3" rx="1.500" fill="#7fe6e0"/>
<path d="M66 44 h5 l1 16 h-2.500 l-0.500 -8 l-1 8 h-2.500 Z" fill="#242560"/><circle cx="68.500" cy="40.500" r="2.300" fill="#d9a27f"/><path d="M98.500 35 h6 l1 20 h-2.800 l-0.700 -9 l-1 9 h-2.800 Z" fill="#242560"/><circle cx="101.500" cy="31.500" r="2.300" fill="#d9a27f"/>
<rect x="61" y="28" width="7" height="6" fill="#5fd0c8"/><rect x="103" y="23" width="7" height="9" fill="#5fd0c8"/></svg></div><div class="ver">version: 3.0</div></div>
<div class="ct" style="top:17px">Loan Assistant Agent for Banking Services</div>
<div class="ind" style="top:40px">Industry : Financial Services</div>
<div class="desc" style="top:61px">A Loan Assistant Bot is designed to streamline the loan application process by providing<br>users with ...</div>
<div class="more" style="top:109px">See more</div>
<div class="cicon" style="right:43.900px;top:19.800px"><svg width="17.400" height="17.400" viewBox="0 0 24 24"><path fill="#000" stroke="#000" stroke-width="0.35" d="M22.2819 9.8211a5.9847 5.9847 0 0 0-.5157-4.9108 6.0462 6.0462 0 0 0-6.5098-2.9A6.0651 6.0651 0 0 0 4.9807 4.1818a5.9847 5.9847 0 0 0-3.9977 2.9 6.0462 6.0462 0 0 0 .7427 7.0966 5.98 5.98 0 0 0 .511 4.9107 6.051 6.051 0 0 0 6.5146 2.9001A5.9847 5.9847 0 0 0 13.2599 24a6.0557 6.0557 0 0 0 5.7718-4.2058 5.9894 5.9894 0 0 0 3.9977-2.9001 6.0557 6.0557 0 0 0-.7475-7.0729zm-9.022 12.6081a4.4755 4.4755 0 0 1-2.8764-1.0408l.1419-.0804 4.7783-2.7582a.7948.7948 0 0 0 .3927-.6813v-6.7369l2.02 1.1686a.071.071 0 0 1 .038.052v5.5826a4.504 4.504 0 0 1-4.4945 4.4944zm-9.6607-4.1254a4.4708 4.4708 0 0 1-.5346-3.0137l.142.0852 4.783 2.7582a.7712.7712 0 0 0 .7806 0l5.8428-3.3685v2.3324a.0804.0804 0 0 1-.0332.0615L9.74 19.9502a4.4992 4.4992 0 0 1-6.1408-1.6464zM2.3408 7.8956a4.485 4.485 0 0 1 2.3655-1.9728V11.6a.7664.7664 0 0 0 .3879.6765l5.8144 3.3543-2.0201 1.1685a.0757.0757 0 0 1-.071 0l-4.8303-2.7865A4.504 4.504 0 0 1 2.3408 7.872zm16.5963 3.8558L13.1038 8.364 15.1192 7.2a.0757.0757 0 0 1 .071 0l4.8303 2.7913a4.4944 4.4944 0 0 1-.6765 8.1042v-5.6772a.79.79 0 0 0-.407-.667zm2.0107-3.0231l-.142-.0852-4.7735-2.7818a.7759.7759 0 0 0-.7854 0L9.409 9.2297V6.8974a.0662.0662 0 0 1 .0284-.0615l4.8303-2.7866a4.4992 4.4992 0 0 1 6.6802 4.66zM8.3065 12.863l-2.02-1.1638a.0804.0804 0 0 1-.038-.0567V6.0742a4.4992 4.4992 0 0 1 7.3757-3.4537l-.142.0805L8.704 5.459a.7948.7948 0 0 0-.3927.6813zm1.0976-2.3654l2.602-1.4998 2.6069 1.4998v2.9994l-2.5974 1.4997-2.6067-1.4997Z"/></svg></div><div class="cicon" style="right:18px;top:20px"><svg width="18" height="16" viewBox="0 0 576 512"><path fill="#c2c2c2" d="M259.3 17.8L194 150.2 47.9 171.5c-26.200 3.800-36.700 36.100-17.700 54.600l105.700 103-25 145.500c-4.500 26.300 23.200 46 46.400 33.700L288 439.600l130.700 68.700c23.200 12.200 50.900-7.400 46.400-33.700l-25-145.500 105.700-103c19-18.500 8.500-50.800-17.700-54.600L382 150.200 316.700 17.800c-11.700-23.600-45.600-23.900-57.400 0z"/></svg></div>
<div class="cicon" style="right:41.700px;top:108.3px"><svg width="12.400" height="15.600" viewBox="0 0 12.400 15.600"><defs><linearGradient id="sqg" x1="0" y1="0" x2="1" y2="0"><stop offset="0" stop-color="#2450ae"/><stop offset="0.5" stop-color="#3a6ad0"/><stop offset="1" stop-color="#2450ae"/></linearGradient></defs><path d="M0.300 2.600 V13.200 C0.300 14.500 2.900 15.400 6.200 15.400 C9.500 15.400 12.100 14.500 12.100 13.200 V2.600 Z" fill="url(#sqg)"/><ellipse cx="6.200" cy="2.600" rx="5.900" ry="2.400" fill="#a8e2f5"/><ellipse cx="6.200" cy="2.500" rx="4.600" ry="1.500" fill="#55d4f2"/><text transform="translate(6.200 10.900) scale(0.700 1)" text-anchor="middle" font-family="Liberation Sans, sans-serif" font-size="6.300" fill="#fff">SQL</text></svg></div><div class="cicon" style="right:16.300px;top:108px"><svg width="16" height="16" viewBox="0 0 16 16"><defs><radialGradient id="wbn" cx="0.4" cy="0.35" r="0.7"><stop offset="0" stop-color="#ffffff"/><stop offset="1" stop-color="#d9d9d6"/></radialGradient></defs><circle cx="8" cy="8" r="7.800" fill="#2f66d2"/><path d="M3.700 7.700 L12.300 7.900 L8.800 12.100 Z" fill="#5f90e8"/><path d="M3.700 7.700 L6 1 M3.700 7.700 L1.600 12 M12.300 7.900 L5.500 1.500 M12.300 7.900 L14.600 4.600 M12.300 7.900 L14.400 11.800 M8.800 12.100 L6 15.200 M8.800 12.100 L12.600 13.800 M3.700 7.700 L8.800 12.100 L12.300 7.900 Z" fill="none" stroke="#8fb4f2" stroke-width="0.700"/><circle cx="3.900" cy="7.700" r="2.200" fill="url(#wbn)"/><circle cx="12.300" cy="7.900" r="1.500" fill="url(#wbn)"/><circle cx="8.800" cy="12.100" r="1.750" fill="url(#wbn)"/></svg></div>
<div class="btn b1" style="top:138px;width:295px"><svg width="10.500" height="14" viewBox="0 0 384 512"><path fill="#2f5bb5" d="M288 256H96v64h192v-64zm89-151L279.100 7c-4.500-4.500-10.600-7-17-7H256v128h128v-6.100c0-6.300-2.500-12.400-7-16.900zm-153 31V0H24C10.700 0 0 10.700 0 24v464c0 13.300 10.700 24 24 24h336c13.300 0 24-10.700 24-24V160H248c-13.200 0-24-10.800-24-24zM64 72c0-4.420 3.580-8 8-8h80c4.420 0 8 3.580 8 8v16c0 4.420-3.580 8-8 8H72c-4.420 0-8-3.580-8-8V72zm0 64c0-4.420 3.580-8 8-8h80c4.420 0 8 3.580 8 8v16c0 4.420-3.580 8-8 8H72c-4.420 0-8-3.580-8-8v-16zm256 304c0 4.420-3.580 8-8 8h-80c-4.420 0-8-3.580-8-8v-16c0-4.420 3.580-8 8-8h80c4.420 0 8 3.580 8 8v16zm0-200v96c0 8.840-7.160 16-16 16H80c-8.840 0-16-7.160-16-16v-96c0-8.840 7.160-16 16-16h224c8.840 0 16 7.160 16 16z"/></svg>Case Study</div><div class="btn b2" style="top:138px;left:463.6px;right:16.1px">Demo</div>
</div>
<div class="card" style="left:1164.8px;top:271px;height:187px;width:717.3px">
<div class="thumb"><div class="img"><svg width="110" height="110" viewBox="0 0 110 110"><defs><pattern id="kml" width="3" height="3" patternUnits="userSpaceOnUse" patternTransform="rotate(24)"><rect width="3" height="3" fill="none"/><rect y="0.900" width="3" height="0.600" fill="#8fc4e6" opacity=".55"/></pattern><pattern id="kmk" width="3.200" height="3.200" patternUnits="userSpaceOnUse" patternTransform="rotate(27)"><rect width="3.200" height="3.200" fill="#17161c"/><rect x="0.600" y="0.600" width="1.900" height="1.900" fill="#3f3558"/></pattern><filter id="kb" x="-20%" y="-20%" width="140%" height="140%"><feGaussianBlur stdDeviation="0.700"/></filter></defs>
<rect width="110" height="110" fill="#0b0b10"/>
<polygon points="36,5 110,30 110,80 72,60 10,64" fill="#16202c"/>
<polygon points="58,12 110,30 110,46 80,36" fill="#1c1c24"/>
<polygon points="2,10 36,5 40,22 12,62 6,56" fill="#4a5c6e" opacity=".85"/>
<polygon points="14,2 44,4 88,40 74,58 40,46 30,22" fill="url(#kml)" filter="url(#kb)"/>
<polygon points="30,4 60,12 86,38 60,30" fill="url(#kml)" opacity=".8"/>
<path d="M36 6 L12 60" stroke="#b9c4cc" stroke-width="1.300" opacity=".8"/>
<g stroke="#9fd0ee" stroke-width="0.700" opacity=".9"><path d="M20 4 L56 20 M24 10 L70 32 M30 3 L48 10 M44 14 L84 36"/></g>
<g stroke="#e070b8" stroke-width="1.100" opacity=".9"><path d="M99 34 L110 38 M98 37.500 L110 41.500 M100 41 L110 44.500"/></g>
<polygon points="92,48 110,54 110,76 88,64" fill="#2a4468" opacity=".6"/><polygon points="92,48 110,54 110,76 88,64" fill="url(#kml)" opacity=".8"/>
<polygon points="30,72 72,59 110,79 110,84 74,110 62,110 46,90" fill="#b9b5b1"/>
<polygon points="46,90 62,82 82,100 74,110 62,110" fill="#a8a4a0"/>
<polygon points="56,70 78,62 101,78 83,90" fill="url(#kmk)"/>
<path d="M0 24 C6 30 10 44 10 62 C8 72 4 80 0 84 Z" fill="#1a1210"/>
<path d="M0 84 C4 78 8 70 10 63 C18 60 28 56 36 55 C40 56 40 60 36 64 L30 72 L46 90 C50 96 50 104 48 110 L0 110 Z" fill="#d2cbc4"/>
<path d="M8 82 C20 84 34 88 44 94 M2 92 C8 94 12 100 12 110" stroke="#b9b0a8" stroke-width="0.800" fill="none"/>
<path d="M74 104 C74 94 80 88 90 89 C96 90 99 96 98 104 L96 110 H76 Z" fill="#5a4034"/>
<circle cx="54" cy="55" r="17" fill="#8fb4c8" opacity=".5"/><circle cx="54" cy="55" r="17" fill="none" stroke="#a8c8d8" stroke-width="0.600" opacity=".6"/>
<text x="54" y="61.500" text-anchor="middle" font-family="Liberation Sans, sans-serif" font-weight="700" font-size="17" fill="none" stroke="#d9b860" stroke-width="0.900" opacity=".95">AI</text></svg></div><div class="ver">version: 3.0</div></div>
<div class="ct" style="top:17px">Knowledge Mining Agent for Line Management</div>
<div class="ind" style="top:40px">Industry : Small and Midsize Business</div>
<div class="desc" style="top:61px">A knowledge mining chatbot leverages AI to extract and analyze information from vast<br>data sources, e...</div>
<div class="more" style="top:109px">See more</div>
<div class="cicon" style="right:43.900px;top:19.800px"><svg width="17.400" height="17.400" viewBox="0 0 24 24"><path fill="#000" stroke="#000" stroke-width="0.35" d="M22.2819 9.8211a5.9847 5.9847 0 0 0-.5157-4.9108 6.0462 6.0462 0 0 0-6.5098-2.9A6.0651 6.0651 0 0 0 4.9807 4.1818a5.9847 5.9847 0 0 0-3.9977 2.9 6.0462 6.0462 0 0 0 .7427 7.0966 5.98 5.98 0 0 0 .511 4.9107 6.051 6.051 0 0 0 6.5146 2.9001A5.9847 5.9847 0 0 0 13.2599 24a6.0557 6.0557 0 0 0 5.7718-4.2058 5.9894 5.9894 0 0 0 3.9977-2.9001 6.0557 6.0557 0 0 0-.7475-7.0729zm-9.022 12.6081a4.4755 4.4755 0 0 1-2.8764-1.0408l.1419-.0804 4.7783-2.7582a.7948.7948 0 0 0 .3927-.6813v-6.7369l2.02 1.1686a.071.071 0 0 1 .038.052v5.5826a4.504 4.504 0 0 1-4.4945 4.4944zm-9.6607-4.1254a4.4708 4.4708 0 0 1-.5346-3.0137l.142.0852 4.783 2.7582a.7712.7712 0 0 0 .7806 0l5.8428-3.3685v2.3324a.0804.0804 0 0 1-.0332.0615L9.74 19.9502a4.4992 4.4992 0 0 1-6.1408-1.6464zM2.3408 7.8956a4.485 4.485 0 0 1 2.3655-1.9728V11.6a.7664.7664 0 0 0 .3879.6765l5.8144 3.3543-2.0201 1.1685a.0757.0757 0 0 1-.071 0l-4.8303-2.7865A4.504 4.504 0 0 1 2.3408 7.872zm16.5963 3.8558L13.1038 8.364 15.1192 7.2a.0757.0757 0 0 1 .071 0l4.8303 2.7913a4.4944 4.4944 0 0 1-.6765 8.1042v-5.6772a.79.79 0 0 0-.407-.667zm2.0107-3.0231l-.142-.0852-4.7735-2.7818a.7759.7759 0 0 0-.7854 0L9.409 9.2297V6.8974a.0662.0662 0 0 1 .0284-.0615l4.8303-2.7866a4.4992 4.4992 0 0 1 6.6802 4.66zM8.3065 12.863l-2.02-1.1638a.0804.0804 0 0 1-.038-.0567V6.0742a4.4992 4.4992 0 0 1 7.3757-3.4537l-.142.0805L8.704 5.459a.7948.7948 0 0 0-.3927.6813zm1.0976-2.3654l2.602-1.4998 2.6069 1.4998v2.9994l-2.5974 1.4997-2.6067-1.4997Z"/></svg></div><div class="cicon" style="right:18px;top:20px"><svg width="18" height="16" viewBox="0 0 576 512"><path fill="#c2c2c2" d="M259.3 17.8L194 150.2 47.9 171.5c-26.200 3.800-36.700 36.100-17.700 54.600l105.700 103-25 145.500c-4.500 26.300 23.200 46 46.400 33.700L288 439.600l130.700 68.700c23.200 12.200 50.900-7.400 46.400-33.700l-25-145.500 105.700-103c19-18.500 8.500-50.800-17.700-54.600L382 150.200 316.700 17.800c-11.700-23.600-45.600-23.900-57.400 0z"/></svg></div>
<div class="cicon" style="right:41.700px;top:108.3px"><svg width="12.400" height="15.600" viewBox="0 0 12.400 15.600"><defs><linearGradient id="sqg" x1="0" y1="0" x2="1" y2="0"><stop offset="0" stop-color="#2450ae"/><stop offset="0.5" stop-color="#3a6ad0"/><stop offset="1" stop-color="#2450ae"/></linearGradient></defs><path d="M0.300 2.600 V13.200 C0.300 14.500 2.900 15.400 6.200 15.400 C9.500 15.400 12.100 14.500 12.100 13.200 V2.600 Z" fill="url(#sqg)"/><ellipse cx="6.200" cy="2.600" rx="5.900" ry="2.400" fill="#a8e2f5"/><ellipse cx="6.200" cy="2.500" rx="4.600" ry="1.500" fill="#55d4f2"/><text transform="translate(6.200 10.900) scale(0.700 1)" text-anchor="middle" font-family="Liberation Sans, sans-serif" font-size="6.300" fill="#fff">SQL</text></svg></div><div class="cicon" style="right:16.300px;top:108px"><svg width="16" height="16" viewBox="0 0 16 16"><defs><radialGradient id="wbn" cx="0.4" cy="0.35" r="0.7"><stop offset="0" stop-color="#ffffff"/><stop offset="1" stop-color="#d9d9d6"/></radialGradient></defs><circle cx="8" cy="8" r="7.800" fill="#2f66d2"/><path d="M3.700 7.700 L12.300 7.900 L8.800 12.100 Z" fill="#5f90e8"/><path d="M3.700 7.700 L6 1 M3.700 7.700 L1.600 12 M12.300 7.900 L5.500 1.500 M12.300 7.900 L14.600 4.600 M12.300 7.900 L14.400 11.800 M8.800 12.100 L6 15.200 M8.800 12.100 L12.600 13.800 M3.700 7.700 L8.800 12.100 L12.300 7.900 Z" fill="none" stroke="#8fb4f2" stroke-width="0.700"/><circle cx="3.900" cy="7.700" r="2.200" fill="url(#wbn)"/><circle cx="12.300" cy="7.900" r="1.500" fill="url(#wbn)"/><circle cx="8.800" cy="12.100" r="1.750" fill="url(#wbn)"/></svg></div>
<div class="btn b1" style="top:138px;width:295px"><svg width="10.500" height="14" viewBox="0 0 384 512"><path fill="#2f5bb5" d="M288 256H96v64h192v-64zm89-151L279.100 7c-4.500-4.500-10.600-7-17-7H256v128h128v-6.100c0-6.300-2.500-12.400-7-16.900zm-153 31V0H24C10.700 0 0 10.700 0 24v464c0 13.300 10.700 24 24 24h336c13.300 0 24-10.700 24-24V160H248c-13.200 0-24-10.800-24-24zM64 72c0-4.420 3.580-8 8-8h80c4.420 0 8 3.580 8 8v16c0 4.420-3.580 8-8 8H72c-4.420 0-8-3.580-8-8V72zm0 64c0-4.420 3.580-8 8-8h80c4.420 0 8 3.580 8 8v16c0 4.420-3.580 8-8 8H72c-4.420 0-8-3.580-8-8v-16zm256 304c0 4.420-3.580 8-8 8h-80c-4.420 0-8-3.580-8-8v-16c0-4.420 3.580-8 8-8h80c4.420 0 8 3.580 8 8v16zm0-200v96c0 8.840-7.160 16-16 16H80c-8.840 0-16-7.160-16-16v-96c0-8.840 7.160-16 16-16h224c8.840 0 16 7.160 16 16z"/></svg>Case Study</div><div class="btn b2" style="top:138px;left:464.3px;right:16.4px">Demo</div>
</div>
<div class="card" style="left:426.5px;top:470px;height:211px;width:716.6px">
<div class="thumb"><div class="img"><svg width="110" height="110" viewBox="0 0 110 110"><defs><linearGradient id="dg" x1="0" y1="0" x2="1" y2="1"><stop offset="0" stop-color="#2d2a86"/><stop offset="1" stop-color="#4a56b8"/></linearGradient></defs>
<rect width="110" height="110" fill="#fdfdff"/>
<path d="M80 0 H110 V110 H84 C66 100 56 80 56 56 C56 30 66 10 80 0 Z" fill="url(#dg)"/>
<g stroke="#dfe3ee" stroke-width="2"><path d="M8 25 H44 M8 33 H50 M8 41 H28 M8 49 H40 M8 57 H30"/></g>
<rect x="10" y="97" width="100" height="10" rx="3" fill="#b4d4f6"/><rect x="18" y="95" width="84" height="3" fill="#5f86e0"/>
<rect x="22" y="44" width="8" height="26" rx="3" fill="#9fc4ef"/><rect x="90" y="44" width="8" height="26" rx="3" fill="#9fc4ef"/>
<circle cx="60" cy="56" r="30" fill="#a9cbf2"/><path d="M52 70 H68 V98 H52 Z" fill="#eaf2fd"/>
<circle cx="60" cy="54" r="14" fill="#fff"/><circle cx="60" cy="54" r="12" fill="#5a6eb8"/><circle cx="65" cy="48" r="3" fill="#8d9bd6"/>
<rect x="58.500" y="29" width="3.500" height="8" rx="1.700" fill="#3f4fa0"/>
<polygon points="44,0 67,0 67,18 62,12 44,16" fill="#5fd4c4"/><polygon points="84,12 105,12 105,26 88,26 84,30" fill="#5fd4c4"/><polygon points="13,20 31,20 31,36 28,33 13,33" fill="#5fd4c4"/>
<g fill="#fff"><circle cx="50" cy="8" r="1.500"/><circle cx="55.500" cy="8" r="1.500"/><circle cx="61" cy="8" r="1.500"/><circle cx="89.500" cy="19" r="1.500"/><circle cx="94.500" cy="19" r="1.500"/><circle cx="99.500" cy="19" r="1.500"/><circle cx="17.500" cy="27" r="1.300"/><circle cx="22" cy="27" r="1.300"/><circle cx="26.500" cy="27" r="1.300"/></g>
<ellipse cx="10.500" cy="58" rx="3" ry="4" fill="#1d1a2a"/><path d="M4 66 C8 62 14 62 16 68 L22 62 L23 64 L16 74 L14 84 L4 88 C2 80 2 72 4 66 Z" fill="#4a4fc0"/><rect x="8" y="68" width="5" height="14" fill="#e8d4c8"/><path d="M6 84 H15 L16 108 H13 L11 92 L5 108 H2 Z" fill="#1f2340"/>
<ellipse cx="36.500" cy="58" rx="3" ry="4" fill="#1a1420"/><circle cx="37" cy="60" r="2.600" fill="#6e4634"/><path d="M32 66 C36 63 41 64 42 68 L44 84 L40 94 H33 C30 86 30 74 32 66 Z" fill="#262a56"/><rect x="26" y="70" width="10" height="8" fill="#f0f2f8"/><path d="M35 94 L36 108 M38 94 L38 108" stroke="#6e4634" stroke-width="1.400"/></svg></div><div class="ver">version: 3.0</div></div>
<div class="ct" style="top:17px">Document Intelligence Agent for Legal Claims and Insurance<br>Law</div>
<div class="ind" style="top:64.5px">Industry : Insurance</div>
<div class="desc" style="top:85px">Document Intelligence Agent for Legal Claims and Insurance Law to generate concise,<br>one-page summari...</div>
<div class="more" style="top:133px">See more</div>
<div class="cicon" style="right:43.900px;top:19.800px"><svg width="17.400" height="17.400" viewBox="0 0 24 24"><path fill="#000" stroke="#000" stroke-width="0.35" d="M22.2819 9.8211a5.9847 5.9847 0 0 0-.5157-4.9108 6.0462 6.0462 0 0 0-6.5098-2.9A6.0651 6.0651 0 0 0 4.9807 4.1818a5.9847 5.9847 0 0 0-3.9977 2.9 6.0462 6.0462 0 0 0 .7427 7.0966 5.98 5.98 0 0 0 .511 4.9107 6.051 6.051 0 0 0 6.5146 2.9001A5.9847 5.9847 0 0 0 13.2599 24a6.0557 6.0557 0 0 0 5.7718-4.2058 5.9894 5.9894 0 0 0 3.9977-2.9001 6.0557 6.0557 0 0 0-.7475-7.0729zm-9.022 12.6081a4.4755 4.4755 0 0 1-2.8764-1.0408l.1419-.0804 4.7783-2.7582a.7948.7948 0 0 0 .3927-.6813v-6.7369l2.02 1.1686a.071.071 0 0 1 .038.052v5.5826a4.504 4.504 0 0 1-4.4945 4.4944zm-9.6607-4.1254a4.4708 4.4708 0 0 1-.5346-3.0137l.142.0852 4.783 2.7582a.7712.7712 0 0 0 .7806 0l5.8428-3.3685v2.3324a.0804.0804 0 0 1-.0332.0615L9.74 19.9502a4.4992 4.4992 0 0 1-6.1408-1.6464zM2.3408 7.8956a4.485 4.485 0 0 1 2.3655-1.9728V11.6a.7664.7664 0 0 0 .3879.6765l5.8144 3.3543-2.0201 1.1685a.0757.0757 0 0 1-.071 0l-4.8303-2.7865A4.504 4.504 0 0 1 2.3408 7.872zm16.5963 3.8558L13.1038 8.364 15.1192 7.2a.0757.0757 0 0 1 .071 0l4.8303 2.7913a4.4944 4.4944 0 0 1-.6765 8.1042v-5.6772a.79.79 0 0 0-.407-.667zm2.0107-3.0231l-.142-.0852-4.7735-2.7818a.7759.7759 0 0 0-.7854 0L9.409 9.2297V6.8974a.0662.0662 0 0 1 .0284-.0615l4.8303-2.7866a4.4992 4.4992 0 0 1 6.6802 4.66zM8.3065 12.863l-2.02-1.1638a.0804.0804 0 0 1-.038-.0567V6.0742a4.4992 4.4992 0 0 1 7.3757-3.4537l-.142.0805L8.704 5.459a.7948.7948 0 0 0-.3927.6813zm1.0976-2.3654l2.602-1.4998 2.6069 1.4998v2.9994l-2.5974 1.4997-2.6067-1.4997Z"/></svg></div><div class="cicon" style="right:18px;top:20px"><svg width="18" height="16" viewBox="0 0 576 512"><path fill="#c2c2c2" d="M259.3 17.8L194 150.2 47.9 171.5c-26.200 3.800-36.700 36.100-17.700 54.600l105.700 103-25 145.500c-4.500 26.300 23.200 46 46.400 33.700L288 439.600l130.700 68.700c23.200 12.200 50.900-7.400 46.400-33.700l-25-145.500 105.700-103c19-18.500 8.500-50.800-17.700-54.600L382 150.200 316.700 17.800c-11.700-23.600-45.600-23.900-57.400 0z"/></svg></div>
<div class="cicon" style="right:41.700px;top:132.3px"><svg width="12.400" height="15.600" viewBox="0 0 12.400 15.600"><defs><linearGradient id="sqg" x1="0" y1="0" x2="1" y2="0"><stop offset="0" stop-color="#2450ae"/><stop offset="0.5" stop-color="#3a6ad0"/><stop offset="1" stop-color="#2450ae"/></linearGradient></defs><path d="M0.300 2.600 V13.200 C0.300 14.500 2.900 15.400 6.200 15.400 C9.500 15.400 12.100 14.500 12.100 13.200 V2.600 Z" fill="url(#sqg)"/><ellipse cx="6.200" cy="2.600" rx="5.900" ry="2.400" fill="#a8e2f5"/><ellipse cx="6.200" cy="2.500" rx="4.600" ry="1.500" fill="#55d4f2"/><text transform="translate(6.200 10.900) scale(0.700 1)" text-anchor="middle" font-family="Liberation Sans, sans-serif" font-size="6.300" fill="#fff">SQL</text></svg></div><div class="cicon" style="right:16.300px;top:132px"><svg width="16" height="16" viewBox="0 0 16 16"><defs><radialGradient id="wbn" cx="0.4" cy="0.35" r="0.7"><stop offset="0" stop-color="#ffffff"/><stop offset="1" stop-color="#d9d9d6"/></radialGradient></defs><circle cx="8" cy="8" r="7.800" fill="#2f66d2"/><path d="M3.700 7.700 L12.300 7.900 L8.800 12.100 Z" fill="#5f90e8"/><path d="M3.700 7.700 L6 1 M3.700 7.700 L1.600 12 M12.300 7.900 L5.500 1.500 M12.300 7.900 L14.600 4.600 M12.300 7.900 L14.400 11.800 M8.800 12.100 L6 15.200 M8.800 12.100 L12.600 13.800 M3.700 7.700 L8.800 12.100 L12.300 7.900 Z" fill="none" stroke="#8fb4f2" stroke-width="0.700"/><circle cx="3.900" cy="7.700" r="2.200" fill="url(#wbn)"/><circle cx="12.300" cy="7.900" r="1.500" fill="url(#wbn)"/><circle cx="8.800" cy="12.100" r="1.750" fill="url(#wbn)"/></svg></div>
<div class="btn b1" style="top:162px;width:295px"><svg width="10.500" height="14" viewBox="0 0 384 512"><path fill="#2f5bb5" d="M288 256H96v64h192v-64zm89-151L279.100 7c-4.500-4.500-10.600-7-17-7H256v128h128v-6.100c0-6.300-2.500-12.400-7-16.900zm-153 31V0H24C10.700 0 0 10.700 0 24v464c0 13.300 10.700 24 24 24h336c13.300 0 24-10.700 24-24V160H248c-13.200 0-24-10.800-24-24zM64 72c0-4.420 3.580-8 8-8h80c4.420 0 8 3.580 8 8v16c0 4.420-3.580 8-8 8H72c-4.420 0-8-3.580-8-8V72zm0 64c0-4.420 3.580-8 8-8h80c4.420 0 8 3.580 8 8v16c0 4.420-3.580 8-8 8H72c-4.420 0-8-3.580-8-8v-16zm256 304c0 4.420-3.580 8-8 8h-80c-4.420 0-8-3.580-8-8v-16c0-4.420 3.580-8 8-8h80c4.420 0 8 3.580 8 8v16zm0-200v96c0 8.840-7.160 16-16 16H80c-8.840 0-16-7.160-16-16v-96c0-8.840 7.160-16 16-16h224c8.840 0 16 7.160 16 16z"/></svg>Case Study</div><div class="btn b2" style="top:162px;left:463.6px;right:16.1px">Demo</div>
</div>
<div class="card" style="left:1164.8px;top:470px;height:211px;width:717.3px">
<div class="thumb"><div class="img"><svg width="110" height="110" viewBox="0 0 110 110"><defs><linearGradient id="rg" x1="0" y1="0" x2="0" y2="1"><stop offset="0" stop-color="#869296"/><stop offset="1" stop-color="#4a565c"/></linearGradient><filter id="rb" x="-20%" y="-20%" width="140%" height="140%"><feGaussianBlur stdDeviation="2.200"/></filter><filter id="rb2" x="-20%" y="-20%" width="140%" height="140%"><feGaussianBlur stdDeviation="0.800"/></filter></defs>
<rect width="110" height="110" fill="#36424a"/><rect width="110" height="28" fill="url(#rg)"/>
<ellipse cx="66" cy="0" rx="30" ry="11" fill="#2c3034" filter="url(#rb)"/>
<polygon points="8,15 110,25 110,100 4,90" fill="#121e28"/>
<polygon points="8,21 110,31 110,96 4,86" fill="#172a3a"/>
<polygon points="6,19.500 110,29.500 110,34 6,24" fill="#c4d6da" filter="url(#rb2)"/><polygon points="30,24 78,28.500 78,30.500 30,26" fill="#3a4a54"/>
<polygon points="8,24 19,25 17,88 4,86" fill="#121e2a"/>
<g fill="#7f98a8" opacity=".7"><rect x="2" y="70" width="9" height="1.300"/><rect x="2" y="74" width="7" height="1.300"/><rect x="2" y="78" width="8" height="1.300"/><rect x="2" y="82" width="6" height="1.300"/><rect x="10" y="32" width="7" height="1.200"/><rect x="10" y="36" width="6" height="1.200"/><rect x="10" y="40" width="7" height="1.200"/></g>
<path d="M0 0 H13 C9 20 7 45 8 66 L0 72 Z" fill="#9a5c3c" opacity=".85" filter="url(#rb)"/><path d="M0 0 H4 C2 30 2 50 3 70 L0 72 Z" fill="#3a2014" filter="url(#rb)"/>
<text x="65" y="46" text-anchor="middle" font-family="Liberation Sans, sans-serif" font-size="4.500" fill="#c9d6dc">Conversational AI</text>
<g fill="#86a4b2" opacity=".75"><rect x="37" y="55" width="15" height="3"/><rect x="55" y="57" width="15" height="3"/><rect x="73" y="59" width="15" height="3" fill="#c08fc0"/><rect x="37" y="60.500" width="15" height="3"/><rect x="55" y="62.500" width="15" height="3"/><rect x="73" y="64.500" width="15" height="3" fill="#c08fc0"/><rect x="37" y="66" width="15" height="3"/><rect x="55" y="68" width="15" height="3"/><rect x="77" y="71" width="11" height="3"/></g>
<rect x="34" y="84" width="54" height="1" fill="#4a6474" transform="rotate(3 60 84)"/>
<polygon points="4,88 110,100 110,110 0,110 0,92" fill="#1a1d21"/>
<g filter="url(#rb2)"><ellipse cx="8" cy="101" rx="11" ry="7" fill="#dcc4b6"/><ellipse cx="64" cy="108" rx="17" ry="6" fill="#d8beb0"/><ellipse cx="16" cy="110" rx="10" ry="3" fill="#c9a898"/></g></svg></div><div class="ver">version: 3.0</div></div>
<div class="ct" style="top:17px">RegOps Insight Agent Mining Governance</div>
<div class="ind" style="top:40px">Industry : Energy</div>
<div class="desc" style="top:61px">Microsoft Azure OpenAI and AI Factory to deploy a Retrieval-Augmented Generation<br>(RAG)-based chatbot...</div>
<div class="more" style="top:109px">See more</div>
<div class="cicon" style="right:43.900px;top:19.800px"><svg width="17.400" height="17.400" viewBox="0 0 24 24"><path fill="#000" stroke="#000" stroke-width="0.35" d="M22.2819 9.8211a5.9847 5.9847 0 0 0-.5157-4.9108 6.0462 6.0462 0 0 0-6.5098-2.9A6.0651 6.0651 0 0 0 4.9807 4.1818a5.9847 5.9847 0 0 0-3.9977 2.9 6.0462 6.0462 0 0 0 .7427 7.0966 5.98 5.98 0 0 0 .511 4.9107 6.051 6.051 0 0 0 6.5146 2.9001A5.9847 5.9847 0 0 0 13.2599 24a6.0557 6.0557 0 0 0 5.7718-4.2058 5.9894 5.9894 0 0 0 3.9977-2.9001 6.0557 6.0557 0 0 0-.7475-7.0729zm-9.022 12.6081a4.4755 4.4755 0 0 1-2.8764-1.0408l.1419-.0804 4.7783-2.7582a.7948.7948 0 0 0 .3927-.6813v-6.7369l2.02 1.1686a.071.071 0 0 1 .038.052v5.5826a4.504 4.504 0 0 1-4.4945 4.4944zm-9.6607-4.1254a4.4708 4.4708 0 0 1-.5346-3.0137l.142.0852 4.783 2.7582a.7712.7712 0 0 0 .7806 0l5.8428-3.3685v2.3324a.0804.0804 0 0 1-.0332.0615L9.74 19.9502a4.4992 4.4992 0 0 1-6.1408-1.6464zM2.3408 7.8956a4.485 4.485 0 0 1 2.3655-1.9728V11.6a.7664.7664 0 0 0 .3879.6765l5.8144 3.3543-2.0201 1.1685a.0757.0757 0 0 1-.071 0l-4.8303-2.7865A4.504 4.504 0 0 1 2.3408 7.872zm16.5963 3.8558L13.1038 8.364 15.1192 7.2a.0757.0757 0 0 1 .071 0l4.8303 2.7913a4.4944 4.4944 0 0 1-.6765 8.1042v-5.6772a.79.79 0 0 0-.407-.667zm2.0107-3.0231l-.142-.0852-4.7735-2.7818a.7759.7759 0 0 0-.7854 0L9.409 9.2297V6.8974a.0662.0662 0 0 1 .0284-.0615l4.8303-2.7866a4.4992 4.4992 0 0 1 6.6802 4.66zM8.3065 12.863l-2.02-1.1638a.0804.0804 0 0 1-.038-.0567V6.0742a4.4992 4.4992 0 0 1 7.3757-3.4537l-.142.0805L8.704 5.459a.7948.7948 0 0 0-.3927.6813zm1.0976-2.3654l2.602-1.4998 2.6069 1.4998v2.9994l-2.5974 1.4997-2.6067-1.4997Z"/></svg></div><div class="cicon" style="right:18px;top:20px"><svg width="18" height="16" viewBox="0 0 576 512"><path fill="#c2c2c2" d="M259.3 17.8L194 150.2 47.9 171.5c-26.200 3.800-36.700 36.100-17.700 54.600l105.700 103-25 145.500c-4.500 26.300 23.200 46 46.400 33.700L288 439.600l130.700 68.700c23.200 12.200 50.900-7.400 46.400-33.700l-25-145.500 105.700-103c19-18.500 8.500-50.800-17.700-54.600L382 150.200 316.700 17.800c-11.700-23.600-45.600-23.900-57.400 0z"/></svg></div>
<div class="cicon" style="right:41.700px;top:108.3px"><svg width="12.400" height="15.600" viewBox="0 0 12.400 15.600"><defs><linearGradient id="sqg" x1="0" y1="0" x2="1" y2="0"><stop offset="0" stop-color="#2450ae"/><stop offset="0.5" stop-color="#3a6ad0"/><stop offset="1" stop-color="#2450ae"/></linearGradient></defs><path d="M0.300 2.600 V13.200 C0.300 14.500 2.900 15.400 6.200 15.400 C9.500 15.400 12.100 14.500 12.100 13.200 V2.600 Z" fill="url(#sqg)"/><ellipse cx="6.200" cy="2.600" rx="5.900" ry="2.400" fill="#a8e2f5"/><ellipse cx="6.200" cy="2.500" rx="4.600" ry="1.500" fill="#55d4f2"/><text transform="translate(6.200 10.900) scale(0.700 1)" text-anchor="middle" font-family="Liberation Sans, sans-serif" font-size="6.300" fill="#fff">SQL</text></svg></div><div class="cicon" style="right:16.300px;top:108px"><svg width="16" height="16" viewBox="0 0 16 16"><defs><radialGradient id="wbn" cx="0.4" cy="0.35" r="0.7"><stop offset="0" stop-color="#ffffff"/><stop offset="1" stop-color="#d9d9d6"/></radialGradient></defs><circle cx="8" cy="8" r="7.800" fill="#2f66d2"/><path d="M3.700 7.700 L12.300 7.900 L8.800 12.100 Z" fill="#5f90e8"/><path d="M3.700 7.700 L6 1 M3.700 7.700 L1.600 12 M12.300 7.900 L5.500 1.500 M12.300 7.900 L14.600 4.600 M12.300 7.900 L14.400 11.800 M8.800 12.100 L6 15.200 M8.800 12.100 L12.600 13.800 M3.700 7.700 L8.800 12.100 L12.300 7.900 Z" fill="none" stroke="#8fb4f2" stroke-width="0.700"/><circle cx="3.900" cy="7.700" r="2.200" fill="url(#wbn)"/><circle cx="12.300" cy="7.900" r="1.500" fill="url(#wbn)"/><circle cx="8.800" cy="12.100" r="1.750" fill="url(#wbn)"/></svg></div>
<div class="btn b1" style="top:162px;width:295px"><svg width="10.500" height="14" viewBox="0 0 384 512"><path fill="#2f5bb5" d="M288 256H96v64h192v-64zm89-151L279.100 7c-4.500-4.500-10.600-7-17-7H256v128h128v-6.100c0-6.300-2.500-12.400-7-16.900zm-153 31V0H24C10.700 0 0 10.700 0 24v464c0 13.300 10.700 24 24 24h336c13.300 0 24-10.700 24-24V160H248c-13.200 0-24-10.800-24-24zM64 72c0-4.420 3.580-8 8-8h80c4.420 0 8 3.580 8 8v16c0 4.420-3.580 8-8 8H72c-4.420 0-8-3.580-8-8V72zm0 64c0-4.420 3.580-8 8-8h80c4.420 0 8 3.580 8 8v16c0 4.420-3.580 8-8 8H72c-4.420 0-8-3.580-8-8v-16zm256 304c0 4.420-3.580 8-8 8h-80c-4.420 0-8-3.580-8-8v-16c0-4.420 3.580-8 8-8h80c4.420 0 8 3.580 8 8v16zm0-200v96c0 8.840-7.160 16-16 16H80c-8.840 0-16-7.160-16-16v-96c0-8.840 7.160-16 16-16h224c8.840 0 16 7.160 16 16z"/></svg>Case Study</div><div class="btn b2" style="top:162px;left:464.3px;right:16.4px">Demo</div>
</div>
<div class="card" style="left:426.5px;top:693px;height:211px;width:716.6px">
<div class="thumb"><div class="img"><svg width="110" height="110" viewBox="0 0 110 110"><defs><pattern id="pd" width="4" height="4" patternUnits="userSpaceOnUse"><rect x="1" y="1" width="1" height="1.600" fill="#4fa0c8" opacity=".7"/></pattern></defs>
<rect width="110" height="110" fill="#0f0a52"/><rect width="110" height="12" fill="#0a0638"/>
<rect x="4" y="28" width="98" height="42" fill="url(#pd)"/><rect x="46" y="8" width="44" height="16" fill="url(#pd)" opacity=".6"/>
<path d="M2 28 H104 M2 71 H104" stroke="#3fc0d6" stroke-width="0.800" opacity=".7"/><path d="M8 73 H30" stroke="#3fd6e0" stroke-width="1.200" stroke-dasharray="4 2"/>
<circle cx="118" cy="24" r="16" fill="none" stroke="#3fd0dc" stroke-width="1.600"/><circle cx="118" cy="24" r="22" fill="none" stroke="#2a7fa8" stroke-width="0.800"/>
<ellipse cx="52" cy="40" rx="14" ry="12" fill="#2a1c14"/>
<path d="M12 110 C14 92 30 80 52 80 C74 80 92 92 96 110 Z" fill="#14162a"/><polygon points="40,82 66,82 60,110 46,110" fill="#f2f2f4"/><polygon points="49,84 57,84 56,110 50,110" fill="#2a3050"/>
<rect x="36" y="37" width="34" height="47" rx="2" fill="#fafafa"/><rect x="38.500" y="41" width="29" height="37" fill="#0f0a48"/>
<path d="M42 53 C42 45 57 45 57 53 C57 60 50 61 45 60 L42 62 Z M58 52 C65 53 66 61 62 63 L63 65.500 L56 64 C53 64 51 62 50 60.500" fill="none" stroke="#3fd6dc" stroke-width="1.300"/><g fill="#3fd6dc"><circle cx="46.500" cy="54" r="0.700"/><circle cx="49.500" cy="54" r="0.700"/><circle cx="52.500" cy="54" r="0.700"/></g>
<path d="M28 74 C32 69 39 69 41 73 L40 90 L30 100 C25 94 24 82 28 74 Z" fill="#4f3628"/><path d="M66 70 C72 69 78 76 80 84 L82 98 L74 100 L68 88 Z" fill="#4f3628"/>
<rect x="10" y="104" width="90" height="2" fill="#3fd6dc" opacity=".6"/></svg></div><div class="ver">version: 3.0</div></div>
<div class="ct" style="top:17px">AI-Driven Policy Training Assistant</div>
<div class="ind" style="top:40px">Industry : Insurance</div>
<div class="desc" style="top:61px">The AI Assistant designed to provide a conversational interface to access, understand,<br>and interact ...</div>
<div class="more" style="top:109px">See more</div>
<div class="cicon" style="right:43.900px;top:19.800px"><svg width="17.400" height="17.400" viewBox="0 0 24 24"><path fill="#000" stroke="#000" stroke-width="0.35" d="M22.2819 9.8211a5.9847 5.9847 0 0 0-.5157-4.9108 6.0462 6.0462 0 0 0-6.5098-2.9A6.0651 6.0651 0 0 0 4.9807 4.1818a5.9847 5.9847 0 0 0-3.9977 2.9 6.0462 6.0462 0 0 0 .7427 7.0966 5.98 5.98 0 0 0 .511 4.9107 6.051 6.051 0 0 0 6.5146 2.9001A5.9847 5.9847 0 0 0 13.2599 24a6.0557 6.0557 0 0 0 5.7718-4.2058 5.9894 5.9894 0 0 0 3.9977-2.9001 6.0557 6.0557 0 0 0-.7475-7.0729zm-9.022 12.6081a4.4755 4.4755 0 0 1-2.8764-1.0408l.1419-.0804 4.7783-2.7582a.7948.7948 0 0 0 .3927-.6813v-6.7369l2.02 1.1686a.071.071 0 0 1 .038.052v5.5826a4.504 4.504 0 0 1-4.4945 4.4944zm-9.6607-4.1254a4.4708 4.4708 0 0 1-.5346-3.0137l.142.0852 4.783 2.7582a.7712.7712 0 0 0 .7806 0l5.8428-3.3685v2.3324a.0804.0804 0 0 1-.0332.0615L9.74 19.9502a4.4992 4.4992 0 0 1-6.1408-1.6464zM2.3408 7.8956a4.485 4.485 0 0 1 2.3655-1.9728V11.6a.7664.7664 0 0 0 .3879.6765l5.8144 3.3543-2.0201 1.1685a.0757.0757 0 0 1-.071 0l-4.8303-2.7865A4.504 4.504 0 0 1 2.3408 7.872zm16.5963 3.8558L13.1038 8.364 15.1192 7.2a.0757.0757 0 0 1 .071 0l4.8303 2.7913a4.4944 4.4944 0 0 1-.6765 8.1042v-5.6772a.79.79 0 0 0-.407-.667zm2.0107-3.0231l-.142-.0852-4.7735-2.7818a.7759.7759 0 0 0-.7854 0L9.409 9.2297V6.8974a.0662.0662 0 0 1 .0284-.0615l4.8303-2.7866a4.4992 4.4992 0 0 1 6.6802 4.66zM8.3065 12.863l-2.02-1.1638a.0804.0804 0 0 1-.038-.0567V6.0742a4.4992 4.4992 0 0 1 7.3757-3.4537l-.142.0805L8.704 5.459a.7948.7948 0 0 0-.3927.6813zm1.0976-2.3654l2.602-1.4998 2.6069 1.4998v2.9994l-2.5974 1.4997-2.6067-1.4997Z"/></svg></div><div class="cicon" style="right:18px;top:20px"><svg width="18" height="16" viewBox="0 0 576 512"><path fill="#c2c2c2" d="M259.3 17.8L194 150.2 47.9 171.5c-26.200 3.800-36.700 36.100-17.700 54.600l105.700 103-25 145.500c-4.500 26.300 23.200 46 46.400 33.700L288 439.600l130.700 68.700c23.200 12.200 50.900-7.400 46.400-33.700l-25-145.500 105.700-103c19-18.500 8.500-50.800-17.700-54.600L382 150.200 316.700 17.800c-11.700-23.600-45.600-23.900-57.400 0z"/></svg></div>
<div class="cicon" style="right:41.700px;top:108.3px"><svg width="12.400" height="15.600" viewBox="0 0 12.400 15.600"><defs><linearGradient id="sqg" x1="0" y1="0" x2="1" y2="0"><stop offset="0" stop-color="#2450ae"/><stop offset="0.5" stop-color="#3a6ad0"/><stop offset="1" stop-color="#2450ae"/></linearGradient></defs><path d="M0.300 2.600 V13.200 C0.300 14.500 2.900 15.400 6.200 15.400 C9.500 15.400 12.100 14.500 12.100 13.200 V2.600 Z" fill="url(#sqg)"/><ellipse cx="6.200" cy="2.600" rx="5.900" ry="2.400" fill="#a8e2f5"/><ellipse cx="6.200" cy="2.500" rx="4.600" ry="1.500" fill="#55d4f2"/><text transform="translate(6.200 10.900) scale(0.700 1)" text-anchor="middle" font-family="Liberation Sans, sans-serif" font-size="6.300" fill="#fff">SQL</text></svg></div><div class="cicon" style="right:16.300px;top:108px"><svg width="16" height="16" viewBox="0 0 16 16"><defs><radialGradient id="wbn" cx="0.4" cy="0.35" r="0.7"><stop offset="0" stop-color="#ffffff"/><stop offset="1" stop-color="#d9d9d6"/></radialGradient></defs><circle cx="8" cy="8" r="7.800" fill="#2f66d2"/><path d="M3.700 7.700 L12.300 7.900 L8.800 12.100 Z" fill="#5f90e8"/><path d="M3.700 7.700 L6 1 M3.700 7.700 L1.600 12 M12.300 7.900 L5.500 1.500 M12.300 7.900 L14.600 4.600 M12.300 7.900 L14.400 11.800 M8.800 12.100 L6 15.200 M8.800 12.100 L12.600 13.800 M3.700 7.700 L8.800 12.100 L12.300 7.900 Z" fill="none" stroke="#8fb4f2" stroke-width="0.700"/><circle cx="3.900" cy="7.700" r="2.200" fill="url(#wbn)"/><circle cx="12.300" cy="7.900" r="1.500" fill="url(#wbn)"/><circle cx="8.800" cy="12.100" r="1.750" fill="url(#wbn)"/></svg></div>
<div class="btn b1" style="top:162px;width:295px"><svg width="10.500" height="14" viewBox="0 0 384 512"><path fill="#2f5bb5" d="M288 256H96v64h192v-64zm89-151L279.100 7c-4.500-4.500-10.600-7-17-7H256v128h128v-6.100c0-6.300-2.500-12.400-7-16.900zm-153 31V0H24C10.700 0 0 10.700 0 24v464c0 13.300 10.700 24 24 24h336c13.300 0 24-10.700 24-24V160H248c-13.200 0-24-10.800-24-24zM64 72c0-4.420 3.580-8 8-8h80c4.420 0 8 3.580 8 8v16c0 4.420-3.580 8-8 8H72c-4.420 0-8-3.580-8-8V72zm0 64c0-4.420 3.580-8 8-8h80c4.420 0 8 3.580 8 8v16c0 4.420-3.580 8-8 8H72c-4.420 0-8-3.580-8-8v-16zm256 304c0 4.420-3.580 8-8 8h-80c-4.420 0-8-3.580-8-8v-16c0-4.420 3.580-8 8-8h80c4.420 0 8 3.580 8 8v16zm0-200v96c0 8.840-7.160 16-16 16H80c-8.840 0-16-7.160-16-16v-96c0-8.840 7.160-16 16-16h224c8.840 0 16 7.160 16 16z"/></svg>Case Study</div><div class="btn b2" style="top:162px;left:463.6px;right:16.1px">Demo</div>
</div>
<div class="card" style="left:1164.8px;top:693px;height:211px;width:717.3px">
<div class="thumb"><div class="img"><svg width="110" height="110" viewBox="0 0 110 110"><rect width="110" height="110" fill="#4a96c4"/>
<rect x="10" y="9" width="58" height="48" rx="4" fill="#8fc4e0" opacity=".75"/><rect x="13" y="13" width="52" height="5" fill="#d6ecf6"/><circle cx="54" cy="15.500" r="1" fill="#2a9"/><circle cx="58" cy="15.500" r="1" fill="#d33"/><circle cx="62" cy="15.500" r="1" fill="#eb3"/>
<polygon points="24,30 92,30 96,76 20,76" fill="#15161c"/><polygon points="26,34 90,34 93,72 23,72" fill="#f29a1f"/><rect x="30" y="56" width="40" height="3" fill="#e0831a"/><rect x="30" y="64" width="56" height="2.500" fill="#e0831a"/>
<polygon points="22,76 94,76 108,96 12,96" fill="#e6e9f6"/><polygon points="28,79 90,79 96,88 24,88" fill="#1b1c22"/><polygon points="46,89 74,89 76,95 44,95" fill="#aab2c8"/><rect x="12" y="96" width="96" height="2.500" fill="#c4cbe0"/>
<circle cx="10" cy="30" r="9" fill="#2d2a86"/><text x="10" y="34.500" text-anchor="middle" font-family="Liberation Sans, sans-serif" font-weight="700" font-size="10" fill="#5fe0c0">HI!</text>
<ellipse cx="40" cy="34" rx="16" ry="13" fill="#f4f2fb"/><ellipse cx="25" cy="32" rx="3" ry="7" fill="#6a3fc0"/><ellipse cx="55" cy="32" rx="3" ry="7" fill="#6a3fc0"/><rect x="29" y="26" width="23" height="9" rx="4.500" fill="#1b1c2a"/><path d="M33 32 q2.500 -3 5 0 M43 32 q2.500 -3 5 0" stroke="#4fe0a8" stroke-width="1.300" fill="none"/>
<path d="M28 46 C32 42 50 42 54 46 L56 58 H26 Z" fill="#e9eefb"/><rect x="33" y="38" width="12" height="3" rx="1.500" fill="#7a5fd6"/><rect x="36" y="49" width="28" height="4" fill="#5f9fe6"/>
<circle cx="21" cy="49" r="4.500" fill="#f4f2fb"/><path d="M14 44 L18 48 M17 40 L20 46 M22 39 L23 45" stroke="#6a3fc0" stroke-width="1.600"/>
<rect x="48" y="38" width="20" height="6" rx="3" fill="#f6d6d0"/><rect x="50" y="40" width="14" height="2" fill="#e0506a"/>
<rect x="79" y="30" width="26" height="34" rx="2" fill="#3a3fae"/><circle cx="83.500" cy="34" r="2.500" fill="#1b1c3a"/><rect x="88" y="32" width="14" height="2" fill="#5a60c8"/>
<rect x="84" y="39" width="21" height="6" rx="2" fill="#5fe0b8"/><rect x="84" y="47" width="21" height="6" rx="2" fill="#e0406a"/><rect x="84" y="55" width="21" height="6" rx="2" fill="#eed12a"/></svg></div><div class="ver">version: 3.0</div></div>
<div class="ct" style="top:17px">Customer Service Intelligence Agent for Support Operations and<br>Cloud Networking</div>
<div class="ind" style="top:64.5px">Industry : Other</div>
<div class="desc" style="top:85px">Integrating Azure OpenAI’s generative models with telemetry from Contoso, network<br>flow logs, and ser...</div>
<div class="more" style="top:133px">See more</div>
<div class="cicon" style="right:43.900px;top:19.800px"><svg width="17.400" height="17.400" viewBox="0 0 24 24"><path fill="#000" stroke="#000" stroke-width="0.35" d="M22.2819 9.8211a5.9847 5.9847 0 0 0-.5157-4.9108 6.0462 6.0462 0 0 0-6.5098-2.9A6.0651 6.0651 0 0 0 4.9807 4.1818a5.9847 5.9847 0 0 0-3.9977 2.9 6.0462 6.0462 0 0 0 .7427 7.0966 5.98 5.98 0 0 0 .511 4.9107 6.051 6.051 0 0 0 6.5146 2.9001A5.9847 5.9847 0 0 0 13.2599 24a6.0557 6.0557 0 0 0 5.7718-4.2058 5.9894 5.9894 0 0 0 3.9977-2.9001 6.0557 6.0557 0 0 0-.7475-7.0729zm-9.022 12.6081a4.4755 4.4755 0 0 1-2.8764-1.0408l.1419-.0804 4.7783-2.7582a.7948.7948 0 0 0 .3927-.6813v-6.7369l2.02 1.1686a.071.071 0 0 1 .038.052v5.5826a4.504 4.504 0 0 1-4.4945 4.4944zm-9.6607-4.1254a4.4708 4.4708 0 0 1-.5346-3.0137l.142.0852 4.783 2.7582a.7712.7712 0 0 0 .7806 0l5.8428-3.3685v2.3324a.0804.0804 0 0 1-.0332.0615L9.74 19.9502a4.4992 4.4992 0 0 1-6.1408-1.6464zM2.3408 7.8956a4.485 4.485 0 0 1 2.3655-1.9728V11.6a.7664.7664 0 0 0 .3879.6765l5.8144 3.3543-2.0201 1.1685a.0757.0757 0 0 1-.071 0l-4.8303-2.7865A4.504 4.504 0 0 1 2.3408 7.872zm16.5963 3.8558L13.1038 8.364 15.1192 7.2a.0757.0757 0 0 1 .071 0l4.8303 2.7913a4.4944 4.4944 0 0 1-.6765 8.1042v-5.6772a.79.79 0 0 0-.407-.667zm2.0107-3.0231l-.142-.0852-4.7735-2.7818a.7759.7759 0 0 0-.7854 0L9.409 9.2297V6.8974a.0662.0662 0 0 1 .0284-.0615l4.8303-2.7866a4.4992 4.4992 0 0 1 6.6802 4.66zM8.3065 12.863l-2.02-1.1638a.0804.0804 0 0 1-.038-.0567V6.0742a4.4992 4.4992 0 0 1 7.3757-3.4537l-.142.0805L8.704 5.459a.7948.7948 0 0 0-.3927.6813zm1.0976-2.3654l2.602-1.4998 2.6069 1.4998v2.9994l-2.5974 1.4997-2.6067-1.4997Z"/></svg></div><div class="cicon" style="right:18px;top:20px"><svg width="18" height="16" viewBox="0 0 576 512"><path fill="#c2c2c2" d="M259.3 17.8L194 150.2 47.9 171.5c-26.200 3.800-36.700 36.100-17.700 54.600l105.700 103-25 145.500c-4.500 26.300 23.200 46 46.400 33.700L288 439.600l130.700 68.700c23.200 12.200 50.900-7.400 46.400-33.700l-25-145.500 105.700-103c19-18.500 8.500-50.800-17.700-54.600L382 150.200 316.700 17.800c-11.700-23.600-45.600-23.900-57.400 0z"/></svg></div>
<div class="cicon" style="right:41.700px;top:132.3px"><svg width="12.400" height="15.600" viewBox="0 0 12.400 15.600"><defs><linearGradient id="sqg" x1="0" y1="0" x2="1" y2="0"><stop offset="0" stop-color="#2450ae"/><stop offset="0.5" stop-color="#3a6ad0"/><stop offset="1" stop-color="#2450ae"/></linearGradient></defs><path d="M0.300 2.600 V13.200 C0.300 14.500 2.900 15.400 6.200 15.400 C9.500 15.400 12.100 14.500 12.100 13.200 V2.600 Z" fill="url(#sqg)"/><ellipse cx="6.200" cy="2.600" rx="5.900" ry="2.400" fill="#a8e2f5"/><ellipse cx="6.200" cy="2.500" rx="4.600" ry="1.500" fill="#55d4f2"/><text transform="translate(6.200 10.900) scale(0.700 1)" text-anchor="middle" font-family="Liberation Sans, sans-serif" font-size="6.300" fill="#fff">SQL</text></svg></div><div class="cicon" style="right:16.300px;top:132px"><svg width="16" height="16" viewBox="0 0 16 16"><defs><radialGradient id="wbn" cx="0.4" cy="0.35" r="0.7"><stop offset="0" stop-color="#ffffff"/><stop offset="1" stop-color="#d9d9d6"/></radialGradient></defs><circle cx="8" cy="8" r="7.800" fill="#2f66d2"/><path d="M3.700 7.700 L12.300 7.900 L8.800 12.100 Z" fill="#5f90e8"/><path d="M3.700 7.700 L6 1 M3.700 7.700 L1.600 12 M12.300 7.900 L5.500 1.500 M12.300 7.900 L14.600 4.600 M12.300 7.900 L14.400 11.800 M8.800 12.100 L6 15.200 M8.800 12.100 L12.600 13.800 M3.700 7.700 L8.800 12.100 L12.300 7.900 Z" fill="none" stroke="#8fb4f2" stroke-width="0.700"/><circle cx="3.900" cy="7.700" r="2.200" fill="url(#wbn)"/><circle cx="12.300" cy="7.900" r="1.500" fill="url(#wbn)"/><circle cx="8.800" cy="12.100" r="1.750" fill="url(#wbn)"/></svg></div>
<div class="btn b1" style="top:162px;width:295px"><svg width="10.500" height="14" viewBox="0 0 384 512"><path fill="#2f5bb5" d="M288 256H96v64h192v-64zm89-151L279.100 7c-4.500-4.500-10.600-7-17-7H256v128h128v-6.100c0-6.300-2.500-12.400-7-16.900zm-153 31V0H24C10.700 0 0 10.700 0 24v464c0 13.300 10.700 24 24 24h336c13.300 0 24-10.700 24-24V160H248c-13.200 0-24-10.800-24-24zM64 72c0-4.420 3.580-8 8-8h80c4.420 0 8 3.580 8 8v16c0 4.420-3.580 8-8 8H72c-4.420 0-8-3.580-8-8V72zm0 64c0-4.420 3.580-8 8-8h80c4.420 0 8 3.580 8 8v16c0 4.420-3.580 8-8 8H72c-4.420 0-8-3.580-8-8v-16zm256 304c0 4.420-3.580 8-8 8h-80c-4.420 0-8-3.580-8-8v-16c0-4.420 3.580-8 8-8h80c4.420 0 8 3.580 8 8v16zm0-200v96c0 8.840-7.160 16-16 16H80c-8.840 0-16-7.160-16-16v-96c0-8.840 7.160-16 16-16h224c8.840 0 16 7.160 16 16z"/></svg>Case Study</div><div class="btn b2" style="top:162px;left:464.3px;right:16.4px">Demo</div>
</div>
</div>
<div class="abs vsb"><i></i></div>
<div class="abs hub"><svg width="22" height="22" viewBox="0 0 24 24"><path fill="#e8693c" d="M18.164 7.930V5.084a2.198 2.198 0 001.267-1.978v-.067A2.200 2.200 0 0017.238.845h-.067a2.200 2.200 0 00-2.193 2.193v.067a2.196 2.196 0 001.252 1.973l.013.006v2.852a6.220 6.220 0 00-2.969 1.310l.012-.010-7.828-6.095A2.497 2.497 0 104.300 4.656l-.012.006 7.697 5.991a6.176 6.176 0 00-1.038 3.446c0 1.343.425 2.588 1.147 3.607l-.013-.020-2.342 2.343a1.968 1.968 0 00-.580-.095h-.002a2.033 2.033 0 102.033 2.033 1.978 1.978 0 00-.100-.595l.005.014 2.317-2.317a6.247 6.247 0 104.782-11.134l-.036-.005zm-.964 9.378a3.206 3.206 0 113.215-3.207v.002a3.206 3.206 0 01-3.207 3.207z"/></svg></div>
</div>
</body></html>
